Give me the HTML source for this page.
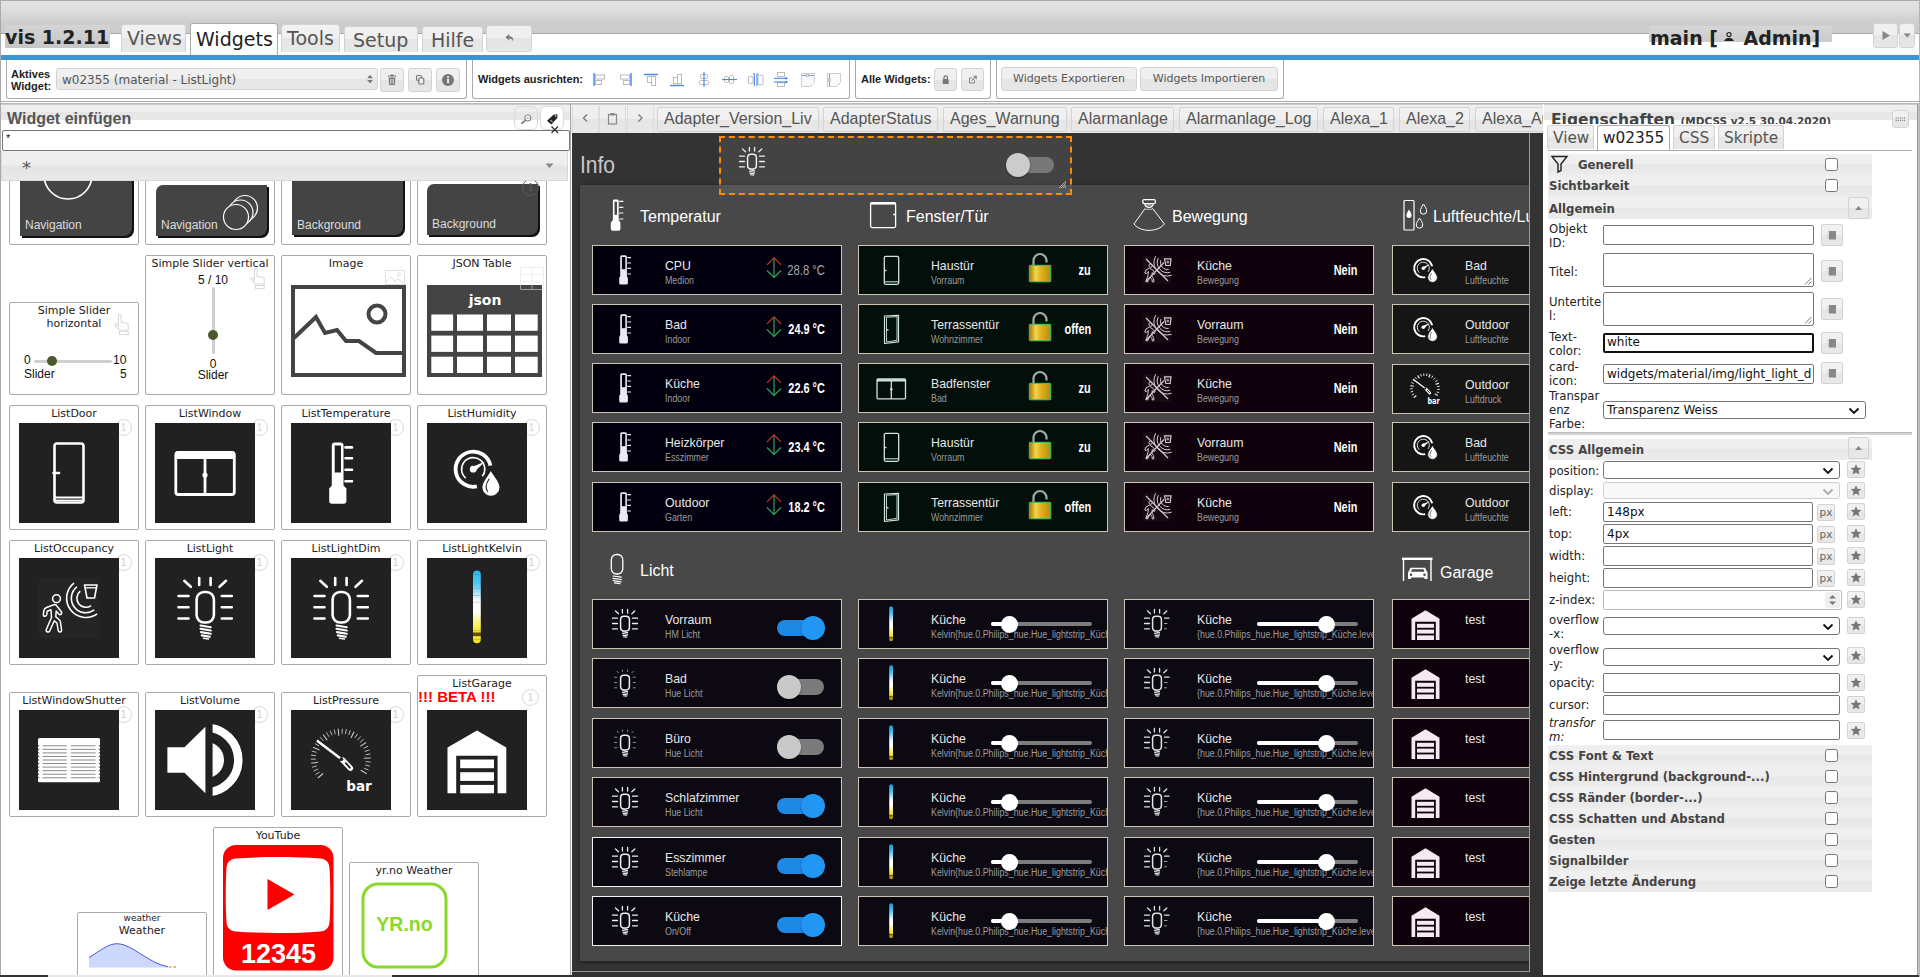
<!DOCTYPE html>
<html lang="de"><head><meta charset="utf-8"><title>vis</title>
<style>

*{box-sizing:border-box;margin:0;padding:0}
html,body{width:1920px;height:977px;overflow:hidden;background:#fff}
body{position:relative;font-family:"DejaVu Sans","Liberation Sans",sans-serif;font-size:12px;color:#222}
.abs{position:absolute}
.ar{font-family:"Liberation Sans",sans-serif}
.dv{font-family:"DejaVu Sans","Liberation Sans",sans-serif}
/* header */
#hdr{left:0;top:0;width:1920px;height:34px;background:linear-gradient(#e2e2e2,#dedede 28%,#cecece 66%,#cbcbcb);border-top:1px solid #aaa;border-bottom:1px solid #aaa}
#frameL{left:0;top:0;width:1px;height:977px;background:#aaa}
.tab{position:absolute;font-size:19px;color:#555;background:linear-gradient(#f1f1f1,#f0f0f0 50%,#e6e6e6 50%,#e8e8e8);border:1px solid #d3d3d3;border-bottom:none;border-radius:3px 3px 0 0;white-space:nowrap;line-height:1}
.tab.on{background:#fff;border-color:#aaa;color:#212121}
.gbtn{position:absolute;background:linear-gradient(#f0f0f0,#efefef 50%,#e4e4e4 50%,#e7e7e7);border:1px solid #d3d3d3;border-radius:3px}
#blue{left:0;top:55px;width:1920px;height:5px;background:#3a96d3}
.grp{position:absolute;top:60px;height:39px;border:1px solid #aaa;border-top:none;border-radius:0 0 3px 3px;background:#fff}
.tlabel{position:absolute;font-family:"Liberation Sans",sans-serif;font-weight:bold;font-size:11px;color:#222;line-height:12px;white-space:nowrap}

/* left panel */
#lp{left:1px;top:104px;width:569px;height:873px;overflow:hidden;background:#fff}
.tile{position:absolute;width:130px;border:1px solid #aaa;border-radius:2px;background:#fff}
.tl{position:absolute;left:0;width:128px;text-align:center;font-size:11px;line-height:13px;color:#222;white-space:nowrap}
.dimg{position:absolute;left:9px;width:100px;height:100px;background:#212121}
.one{position:absolute;width:17px;height:17px;border:1px solid #d8d8d8;border-radius:50%;font-size:10px;line-height:15px;text-align:center;color:#d0d0d0;font-family:"Liberation Sans",sans-serif}

/* center */
#ctb{left:571px;top:104px;width:972px;height:29px;background:linear-gradient(#f0f0f0,#eee 48%,#e5e5e5 52%,#e9e9e9);border-top:1px solid #ccc;overflow:hidden}
.vt{position:absolute;top:2px;height:25px;font-family:"Liberation Sans",sans-serif;font-size:16px;color:#555;line-height:21px;padding-left:6px;white-space:nowrap;background:linear-gradient(#f1f1f1,#f0f0f0 50%,#e6e6e6 50%,#e8e8e8);border:1px solid #d3d3d3;border-radius:2px;overflow:hidden}
#cdark{left:572px;top:133px;width:971px;height:842px;background:#333}
#cv{left:572px;top:133px;width:957px;height:838px;overflow:hidden;background:#333}
.card{position:absolute;width:250px;border:1px solid #cdc4b3;overflow:hidden;font-family:"Liberation Sans",sans-serif}
.ct{position:absolute;left:72px;top:12px;font-size:13.5px;line-height:16px;color:#e8e8e8;white-space:nowrap;transform:scaleX(.91);transform-origin:0 50%}
.cs{position:absolute;left:72px;top:28.5px;font-size:10px;line-height:11px;color:#9c9c9c;white-space:nowrap;transform:scaleX(.885);transform-origin:0 50%}
.cvl{position:absolute;right:16px;top:16px;font-size:14px;line-height:16px;font-weight:bold;color:#fff;white-space:nowrap;transform:scaleX(.78);transform-origin:100% 50%}
.sh{position:absolute;font-family:"Liberation Sans",sans-serif;font-size:16px;line-height:18px;color:#fff;white-space:nowrap}
.ci{position:absolute;left:17px;top:8.500px}

/* right panel */
#rp{left:1544px;top:104px;width:376px;height:871px;background:#fff;overflow:hidden}
.rtab{position:absolute;top:21px;height:24px;font-size:15.3px;color:#555;line-height:25px;padding-left:5px;white-space:nowrap;background:linear-gradient(#f1f1f1,#f0f0f0 50%,#e6e6e6 50%,#e8e8e8);border:1px solid #d3d3d3;border-bottom:none;border-radius:3px 3px 0 0}
.rtab.on{background:#fff;border-color:#aaa;color:#212121;height:25px}
.grow{position:absolute;left:4px;width:324px;height:21px;background:linear-gradient(#f0f0f0,#eee 48%,#e7e7e7 52%,#ececec);font-weight:bold;font-size:11.7px;color:#444;line-height:23px;padding-left:1px;white-space:nowrap}
.cb{position:absolute;left:277px;top:4px;width:13px;height:13px;border:1px solid #767676;border-radius:2.500px;background:#fff}
.lbl{position:absolute;left:5px;font-size:11.7px;line-height:14px;color:#222;white-space:nowrap}
.inp{position:absolute;left:59px;background:#fff;border:1px solid #767676;border-radius:2px;font-size:12px;line-height:18px;color:#111;padding-left:3px;white-space:nowrap;overflow:hidden}
.sbtn{position:absolute;background:linear-gradient(#f1f1f1,#f0f0f0 50%,#e6e6e6 50%,#e8e8e8);border:1px solid #d3d3d3;border-radius:2px}

</style></head>
<body>
<div id="hdr" class="abs"></div>
<div class="abs dv" style="left:5px;top:25px;width:105px;height:23px;background:linear-gradient(#d4d4d4,#c6c6c6);"></div>
<div class="abs dv" id="vistitle" style="left:5px;top:25px;font-size:19px;font-weight:bold;line-height:24px;color:#222;white-space:nowrap">vis 1.2.11</div>
<div class="tab" style="left:121px;top:24px;width:65px;height:28px;padding:4px 0 0 5px">Views</div>
<div class="tab on" style="left:190px;top:23px;width:88px;height:33px;padding:6px 0 0 5px">Widgets</div>
<div class="tab" style="left:281px;top:24px;width:59px;height:28px;padding:4px 0 0 5px">Tools</div>
<div class="tab" style="left:344px;top:26px;width:74px;height:26px;padding:4px 0 0 8px">Setup</div>
<div class="tab" style="left:422px;top:26px;width:61px;height:26px;padding:4px 0 0 8px">Hilfe</div>
<div class="gbtn" style="left:486px;top:25px;width:46px;height:27px"><svg width="46" height="27" viewBox="0 0 46 27" style="position:absolute;left:-1px;top:-1px"><path d="M19.500 12.300 L23.200 9 V11.200 C26.800 11.200 27.800 13.600 26.800 16.500 C26.600 14.600 25.500 13.500 23.200 13.500 V15.600 Z" fill="#7a7a7a"/></svg></div>
<div class="abs" style="left:1649px;top:26px;width:183px;height:16px;background:linear-gradient(#d6d6d6,#cacaca)"></div>
<div class="abs dv" id="maintitle" style="left:1650px;top:26px;font-size:19px;font-weight:bold;line-height:24px;color:#222;white-space:nowrap">main [<svg width="12" height="12" viewBox="0 0 12 12" style="margin:0 8px 0 5.500px;vertical-align:2px"><circle cx="6" cy="3.6" r="2.1" fill="none" stroke="#222" stroke-width="1.2"/><path d="M1 10 C2.5 7.5 4 7 6 7 C8 7 9.5 7.5 11 10 Z" fill="#222"/></svg>Admin]</div>
<div class="gbtn" style="left:1873px;top:23px;width:25px;height:25px"><svg width="25" height="25" style="position:absolute;left:-1px;top:-1px"><path d="M9.5 8 L17 12.5 L9.5 17 Z" fill="#888"/></svg></div>
<div class="gbtn" style="left:1899px;top:23px;width:16px;height:25px"><svg width="16" height="25" style="position:absolute;left:-1px;top:-1px"><path d="M4.5 10.5 H12 L8.2 14.5 Z" fill="#888"/></svg></div>
<div id="blue" class="abs"></div>
<div class="grp" style="left:6px;width:461px"></div>
<div class="grp" style="left:472px;width:378px"></div>
<div class="grp" style="left:855px;width:136px"></div>
<div class="grp" style="left:996px;width:288px"></div>
<div class="abs" style="left:0;top:101px;width:1920px;height:1px;background:#aaa"></div>
<div class="abs" style="left:0;top:103px;width:1920px;height:1px;background:#b8b8b8"></div>
<div class="tlabel" style="left:11px;top:68px">Aktives<br>Widget:</div>
<div class="abs dv" style="left:56px;top:68px;width:322px;height:22px;background:linear-gradient(#f1f1f1,#efefef 50%,#e5e5e5 50%,#e8e8e8);border:1px solid #d3d3d3;border-radius:3px;font-size:12px;color:#555;line-height:22px;padding-left:5px;white-space:nowrap">w02355 (material - ListLight)<svg width="8" height="12" style="position:absolute;left:309px;top:4px"><path d="M1.200 5.200 L4 1.800 L6.800 5.200 Z M1.200 7 L4 10.400 L6.800 7 Z" fill="#777"/></svg></div>
<div class="gbtn" style="left:380px;top:68px;width:24px;height:24px"><svg width="24" height="24" style="position:absolute;left:-1px;top:-1px"><path d="M7.800 8.600 h8.400 v-1.100 h-2.600 v-.9 h-3.200 v.9 h-2.600 Z M8.600 9.600 h6.800 l-.5 6.400 a1 1 0 0 1 -1 1 h-3.800 a1 1 0 0 1 -1 -1 Z" fill="#777"/><path d="M10.500 10.800 v5 M12 10.800 v5 M13.500 10.800 v5" stroke="#eee" stroke-width=".7"/></svg></div>
<div class="gbtn" style="left:408px;top:68px;width:24px;height:24px"><svg width="24" height="24" style="position:absolute;left:-1px;top:-1px"><rect x="8.5" y="7.5" width="5" height="5" rx="1.5" fill="none" stroke="#777" stroke-width="1.2"/><rect x="10.8" y="10" width="5" height="6" rx="1" fill="#eee" stroke="#777" stroke-width="1.2"/></svg></div>
<div class="gbtn" style="left:436px;top:68px;width:24px;height:24px"><svg width="24" height="24" style="position:absolute;left:-1px;top:-1px"><circle cx="12" cy="12" r="6" fill="#777"/><rect x="11.1" y="11" width="1.9" height="4.3" fill="#eee"/><rect x="11.1" y="8.3" width="1.9" height="1.8" fill="#eee"/></svg></div>
<div class="tlabel" style="left:478px;top:73px">Widgets ausrichten:</div>
<div class="tlabel" style="left:861px;top:73px">Alle Widgets:</div>
<div class="gbtn" style="left:934px;top:68px;width:23px;height:23px"><svg width="24" height="24" style="position:absolute;left:-1px;top:-1px"><rect x="8.7" y="11" width="6" height="5" rx="1" fill="#777"/><path d="M10 11 v-1.5 a1.7 1.7 0 0 1 3.4 0 v1.5" fill="none" stroke="#777" stroke-width="1.2"/></svg></div>
<div class="gbtn" style="left:961px;top:68px;width:23px;height:23px"><svg width="24" height="24" style="position:absolute;left:-1px;top:-1px"><path d="M13.5 12.5 v2.5 h-5 v-5 h2.5" fill="none" stroke="#888" stroke-width="1"/><path d="M11 12.5 L15 8.5 M12.3 8.3 h3 v3" fill="none" stroke="#888" stroke-width="1.1"/></svg></div>
<div class="gbtn dv" style="left:1001px;top:67px;width:136px;height:24px;font-size:11px;color:#555;text-align:center;line-height:22px;white-space:nowrap">Widgets Exportieren</div>
<div class="gbtn dv" style="left:1140px;top:67px;width:138px;height:24px;font-size:11px;color:#555;text-align:center;line-height:22px;white-space:nowrap">Widgets Importieren</div>
<svg class="abs" width="17" height="17" style="left:592px;top:71px"><path d="M2 2 V15" stroke="#4a8af0" stroke-width="1.5"/><rect x="3.5" y="4" width="9" height="4" fill="none" stroke="#bbb"/><rect x="3.5" y="9.5" width="6" height="4" fill="none" stroke="#bbb"/></svg>
<svg class="abs" width="17" height="17" style="left:616.5px;top:71px"><path d="M14 2 V15" stroke="#4a8af0" stroke-width="1.5"/><rect x="3.5" y="4" width="9" height="4" fill="none" stroke="#bbb"/><rect x="6.5" y="9.5" width="6" height="4" fill="none" stroke="#bbb"/></svg>
<svg class="abs" width="17" height="17" style="left:643px;top:72px"><path d="M1 2.5 H15" stroke="#4a8af0" stroke-width="1.5"/><rect x="4.5" y="4.5" width="4" height="6" fill="none" stroke="#bbb"/><rect x="8.5" y="4.5" width="4" height="9" fill="none" stroke="#bbb"/></svg>
<svg class="abs" width="17" height="17" style="left:669px;top:71px"><path d="M1 14.5 H15" stroke="#4a8af0" stroke-width="1.5"/><rect x="4.5" y="6.5" width="4" height="6" fill="none" stroke="#bbb"/><rect x="8.5" y="3.5" width="4" height="9" fill="none" stroke="#bbb"/></svg>
<svg class="abs" width="17" height="17" style="left:696px;top:71px"><rect x="4.5" y="3.500" width="7" height="4" rx="1" fill="none" stroke="#bbb"/><rect x="3.5" y="9.5" width="9" height="4" rx="1" fill="none" stroke="#bbb"/><path d="M8 1 V16" stroke="#4a8af0" stroke-width="1.2"/></svg>
<svg class="abs" width="17" height="17" style="left:721px;top:71px"><rect x="3.500" y="5.5" width="4" height="6" rx="1" fill="none" stroke="#bbb"/><rect x="8.5" y="4.5" width="4" height="8" rx="1" fill="none" stroke="#bbb"/><path d="M1 8.5 H16" stroke="#4a8af0" stroke-width="1.2"/></svg>
<svg class="abs" width="17" height="17" style="left:747px;top:71px"><rect x="1.500" y="5.5" width="4.500" height="7" rx="1" fill="none" stroke="#bbb"/><rect x="11" y="4.5" width="5" height="9" rx="1" fill="none" stroke="#bbb"/><path d="M7.300 2.500 V15 M10 2.500 V15" stroke="#3a7af0" stroke-width="1"/><path d="M5.800 3 h1.500 M10 3 h1.500" stroke="#3a7af0" stroke-width=".8"/></svg>
<svg class="abs" width="17" height="17" style="left:773px;top:71px"><rect x="4.500" y="1.5" width="7" height="4" fill="none" stroke="#bbb"/><rect x="4.5" y="11.5" width="7" height="4" fill="none" stroke="#bbb"/><path d="M1 7.300 H14 M1 11 H14" stroke="#3a7af0" stroke-width="1"/><path d="M12.500 5.800 L15 7.300 L12.500 8.800 Z M12.500 9.500 L15 11 L12.500 12.500 Z" fill="#3a7af0"/></svg>
<svg class="abs" width="17" height="17" style="left:798.5px;top:71px"><path d="M2.500 2.5 h13 v9 l-4 4 h-9 Z" fill="#fafafa" stroke="#ccc"/><path d="M3 4.5 h12" stroke="#4a8af0" stroke-width=".8"/><rect x="7.5" y="3.5" width="2" height="2" fill="#fff" stroke="#999" stroke-width=".6"/></svg>
<svg class="abs" width="17" height="17" style="left:824.5px;top:71px"><path d="M2.500 2.5 h13 v9 l-4 4 h-9 Z" fill="#fafafa" stroke="#ccc"/><path d="M4.5 3 v12" stroke="#4a8af0" stroke-width=".8"/><rect x="3.5" y="8" width="2" height="2" fill="#fff" stroke="#999" stroke-width=".6"/></svg>
<div id="lp" class="abs"><div class="tile" style="left:8px;top:76px;height:65px"><div class="abs" style="left:10px;top:-40px;width:112px;height:95px;background:#444;border-radius:6px 0 8px 0;box-shadow:2px 2px 0 #111"></div><svg class="abs" width="60" height="40" style="left:28px;top:-5px"><circle cx="30" cy="-1" r="24" fill="none" stroke="#fff" stroke-width="1.6"/></svg><div class="abs ar" style="left:15px;top:37px;font-size:12px;color:#ddd;line-height:14px">Navigation</div></div><div class="tile" style="left:144px;top:76px;height:65px"><div class="abs" style="left:10px;top:4px;width:111px;height:51px;background:#444;border-radius:7px 0 8px 0;box-shadow:2px 2px 0 #111"></div><svg class="abs" width="50" height="50" style="left:66px;top:8px"><circle cx="33" cy="19" r="12.5" fill="#444" stroke="#fff" stroke-width="1.2"/><circle cx="28.5" cy="23.5" r="12.5" fill="#444" stroke="#fff" stroke-width="1.2"/><circle cx="24" cy="28" r="12.5" fill="#444" stroke="#fff" stroke-width="1.2"/></svg><div class="abs ar" style="left:15px;top:37px;font-size:12px;color:#ddd;line-height:14px">Navigation</div></div><div class="tile" style="left:280px;top:76px;height:65px"><div class="abs" style="left:10px;top:-40px;width:111px;height:94px;background:#444;border-radius:6px 0 8px 0;box-shadow:2px 2px 0 #111"></div><div class="abs ar" style="left:15px;top:37px;font-size:12px;color:#ddd;line-height:14px">Background</div></div><div class="tile" style="left:416px;top:76px;height:65px"><div class="abs" style="left:9px;top:3px;width:111px;height:51px;background:#444;border-radius:7px 0 8px 0;box-shadow:2px 2px 0 #111"></div><div class="abs ar" style="left:14px;top:36px;font-size:12px;color:#ddd;line-height:14px">Background</div><div class="one" style="left:104px;top:-2px;border-color:#5c5c5c;color:#5c5c5c">1</div></div><div class="tile" style="left:8px;top:198px;height:93px"><div class="tl" style="top:1px">Simple Slider<br>horizontal</div><svg class="abs" width="20" height="24" viewBox="0 0 20 24" style="left:102px;top:9px"><path d="M6.5 14 V3.5 a1.3 1.3 0 0 1 2.6 0 V10 l5.5 1.2 a2 2 0 0 1 1.6 2 V18 H7.5 L3 13.5 a1.2 1.2 0 0 1 1.8 -1.5 Z M7.5 19.5 H16.2 V22.5 H7.5 Z" fill="#fff" stroke="#d9d9d9" stroke-width="1.1"/></svg><div class="abs ar" style="left:14px;top:50px;font-size:12px;line-height:14px;color:#111">0</div><div class="abs" style="left:24px;top:56.500px;width:78px;height:3px;background:#cfcfcf;border-radius:1.500px"></div><div class="abs" style="left:37px;top:53px;width:10px;height:10px;border-radius:50%;background:#4b5a2a"></div><div class="abs ar" style="left:103px;top:50px;font-size:12px;line-height:14px;color:#111">10</div><div class="abs ar" style="left:14px;top:64px;font-size:12px;line-height:14px;color:#111">Slider</div><div class="abs ar" style="left:110px;top:64px;font-size:12px;line-height:14px;color:#111">5</div></div><div class="tile" style="left:144px;top:151px;height:140px"><div class="tl" style="top:1px">Simple Slider vertical</div><svg class="abs" width="20" height="24" viewBox="0 0 20 24" style="left:102px;top:10px"><path d="M6.5 14 V3.5 a1.3 1.3 0 0 1 2.6 0 V10 l5.5 1.2 a2 2 0 0 1 1.6 2 V18 H7.5 L3 13.5 a1.2 1.2 0 0 1 1.8 -1.5 Z M7.5 19.5 H16.2 V22.5 H7.5 Z" fill="#fff" stroke="#d9d9d9" stroke-width="1.1"/></svg><div class="abs ar" style="left:0;width:134px;text-align:center;top:17px;font-size:12px;line-height:14px;color:#111">5 / 10</div><div class="abs" style="left:65.500px;top:31px;width:3px;height:67px;background:#cfcfcf;border-radius:1.500px"></div><div class="abs" style="left:62px;top:74px;width:10px;height:10px;border-radius:50%;background:#4b5a2a"></div><div class="abs ar" style="left:0;width:134px;text-align:center;top:101px;font-size:12px;line-height:14px;color:#111">0</div><div class="abs ar" style="left:0;width:134px;text-align:center;top:112px;font-size:12px;line-height:14px;color:#111">Slider</div></div><div class="tile" style="left:280px;top:151px;height:140px"><div class="tl" style="top:1px">Image</div><svg class="abs" width="22" height="18" style="left:102px;top:13px"><rect x="1.500" y="1.5" width="19" height="14" fill="#fff" stroke="#e0e0e0"/><path d="M2 13 l5 -5 l4 4 l3 -2 l6 5" fill="none" stroke="#e0e0e0"/><circle cx="15" cy="5.5" r="1.5" fill="none" stroke="#e0e0e0"/></svg><svg class="abs" width="116" height="93" style="left:9px;top:29px"><rect x="2" y="2" width="111" height="88" fill="#fff" stroke="#444" stroke-width="4"/><path d="M3 53 L25 32 L34 48 L46 45 L55 56 L68 56 L85 68 L113 68" fill="none" stroke="#444" stroke-width="4"/><circle cx="86" cy="29" r="8.5" fill="none" stroke="#444" stroke-width="4"/></svg></div><div class="tile" style="left:416px;top:151px;height:140px"><div class="tl" style="top:1px">JSON Table</div><svg class="abs" width="116" height="93" style="left:9px;top:29px"><rect x="0" y="0" width="115" height="92" fill="#444"/><rect x="4.3" y="29.5" width="21.8" height="16.300" fill="#fff"/><rect x="30" y="29.5" width="26" height="16.300" fill="#fff"/><rect x="60" y="29.5" width="24" height="16.300" fill="#fff"/><rect x="88" y="29.5" width="22.7" height="16.300" fill="#fff"/><rect x="4.3" y="50.6" width="21.8" height="16.300" fill="#fff"/><rect x="30" y="50.6" width="26" height="16.300" fill="#fff"/><rect x="60" y="50.6" width="24" height="16.300" fill="#fff"/><rect x="88" y="50.6" width="22.7" height="16.300" fill="#fff"/><rect x="4.3" y="71.7" width="21.8" height="16.300" fill="#fff"/><rect x="30" y="71.7" width="26" height="16.300" fill="#fff"/><rect x="60" y="71.7" width="24" height="16.300" fill="#fff"/><rect x="88" y="71.7" width="22.7" height="16.300" fill="#fff"/><text x="58" y="20" font-family="DejaVu Sans, sans-serif" font-weight="bold" font-size="14" fill="#fff" text-anchor="middle">json</text></svg><svg class="abs" width="26" height="26" style="left:101px;top:10px" opacity=".55"><path d="M1.5 1.5 h23 v22 h-23 Z M1.5 8.5 h23 M1.5 16 h23 M13 1.5 v22" fill="none" stroke="#e4e4e4" stroke-width="1"/></svg></div><div class="tile" style="left:8px;top:301px;height:125px"><div class="tl" style="top:1px">ListDoor</div><div class="one" style="left:105px;top:13px">1</div><svg class="dimg" style="top:17px" width="100" height="100" viewBox="0 0 100 100"><rect x="35.500" y="20.5" width="29" height="59" rx="2.5" fill="none" stroke="#fff" stroke-width="2.6"/><path d="M36 74.500 H64" stroke="#fff" stroke-width="2"/><path d="M36 77.3 H64" stroke="#fff" stroke-width="1.4"/><path d="M34.5 50 H40" stroke="#fff" stroke-width="2.6" stroke-linecap="round"/></svg></div><div class="tile" style="left:144px;top:301px;height:125px"><div class="tl" style="top:1px">ListWindow</div><div class="one" style="left:105px;top:13px">1</div><svg class="dimg" style="top:17px" width="100" height="100" viewBox="0 0 100 100"><rect x="20.800" y="29.5" width="58.500" height="42" rx="2.5" fill="none" stroke="#fff" stroke-width="2.8"/><rect x="20" y="28.5" width="60" height="7.5" rx="2" fill="#fff"/><path d="M50 35 V72" stroke="#fff" stroke-width="2.8"/><circle cx="50" cy="52" r="2.6" fill="#fff"/></svg></div><div class="tile" style="left:280px;top:301px;height:125px"><div class="tl" style="top:1px">ListTemperature</div><div class="one" style="left:105px;top:13px">1</div><svg class="dimg" style="top:17px" width="100" height="100" viewBox="0 0 100 100"><path d="M40.800 22.500 a3 3 0 0 1 3 -3 h5.700 a3 3 0 0 1 3 3 V62.500 l2.900 3 V78 a2.800 2.800 0 0 1 -2.800 2.800 h-11.600 a2.800 2.800 0 0 1 -2.800 -2.800 V65.500 l2.600 -3 Z" fill="#fff"/><rect x="43.700" y="22.500" width="6.300" height="27" fill="#212121"/><path d="M54.500 24.400 h6.500 M54.500 35.300 h6.500 M54.500 46.700 h6.500 M54.500 58.300 h6.500" stroke="#fff" stroke-width="2.600" stroke-linecap="round"/></svg></div><div class="tile" style="left:416px;top:301px;height:125px"><div class="tl" style="top:1px">ListHumidity</div><div class="one" style="left:105px;top:13px">1</div><svg class="dimg" style="top:17px" width="100" height="100" viewBox="0 0 100 100"><path d="M49.86 63.42 A17.6 17.6 0 1 1 63.42 42.54" fill="none" stroke="#fff" stroke-width="3.8" stroke-linecap="butt"/><path d="M38.74 55.09 A11.6 11.6 0 1 1 55.34 53.34" fill="none" stroke="#fff" stroke-width="1.6" stroke-linecap="butt"/><path d="M45.00 44.00 L58.20 38.40 L47.70 48.40 Z" fill="#fff"/><circle cx="46.2" cy="46.2" r="3.40" fill="#fff"/><path d="M63.80 46.70 C67.80 53.70 73.30 58.70 73.30 64.20 A9.30 9.30 0 0 1 54.60 64.20 C54.60 58.70 59.80 53.70 63.80 46.70 Z" fill="#fff" stroke="#212121" stroke-width="1.60"/><path d="M62.30 55.70 C58.80 60.70 58.30 65.70 60.80 68.70" fill="none" stroke="#212121" stroke-width="1.10"/></svg></div><div class="tile" style="left:8px;top:436px;height:125px"><div class="tl" style="top:1px">ListOccupancy</div><div class="one" style="left:105px;top:13px">1</div><svg class="dimg" style="top:17px" width="100" height="100" viewBox="0 0 100 100"><rect x="19.500" y="19.500" width="61" height="61" fill="#252525"/><circle cx="37.500" cy="40.700" r="3.900" fill="none" stroke="#fff" stroke-width="1.600"/><path d="M35.500 46.500 L27.500 49.500 Q25 50.500 24.800 53 L24.300 56.500 Q24.300 58.300 26 58.300 Q27.600 58.300 27.800 56.500 L28.200 53.200 L32 51.800 L32.500 59.500 L27.300 71.500 Q26.800 73.500 28.500 74 Q30 74.300 30.800 72.800 L35.300 62.800 L38 65 L39.200 72.500 Q39.600 74.300 41.300 74 Q42.800 73.600 42.600 71.800 L41.300 63.500 Q41.200 62.500 40.300 61.800 L36.800 58.800 L37.200 53 L39.800 56 Q41 57.200 42.200 56.200 Q43.300 55.200 42.300 53.800 L38.500 48.800 Q37.500 46.800 35.500 46.500 Z" fill="none" stroke="#fff" stroke-width="1.500" stroke-linejoin="round"/><path d="M65.500 27 H78 L75.500 40 H68 Z" fill="none" stroke="#fff" stroke-width="1.600" stroke-linejoin="round"/><path d="M66 29.800 H77.500" stroke="#fff" stroke-width="1.300"/><path d="M72.09 47.58 A9 9 0 0 1 61.26 33.21" fill="none" stroke="#fff" stroke-width="1.6" stroke-linecap="butt"/><path d="M75.26 51.95 A14.4 14.4 0 0 1 57.93 28.95" fill="none" stroke="#fff" stroke-width="1.6" stroke-linecap="butt"/><path d="M78.14 55.91 A19.3 19.3 0 0 1 54.92 25.09" fill="none" stroke="#fff" stroke-width="1.6" stroke-linecap="butt"/></svg></div><div class="tile" style="left:144px;top:436px;height:125px"><div class="tl" style="top:1px">ListLight</div><div class="one" style="left:105px;top:13px">1</div><svg class="dimg" style="top:17px" width="100" height="100" viewBox="0 0 100 100"><rect x="41.600" y="34" width="17.300" height="30.500" rx="7.500" fill="none" stroke="#fff" stroke-width="2.6"/><path d="M23.500 38 H33.500 M23.500 49.200 H33.500 M23.500 60.500 H33.500 M66.800 38 H76.800 M66.800 49.200 H76.800 M66.800 60.500 H76.800 M44.200 20 V27 M55.600 20 V27 M29.300 22.800 L35.800 28.800 M71 22.800 L64.500 28.800" stroke="#fff" stroke-width="2.6" stroke-linecap="round"/><path d="M45.500 67.500 L55.800 69.200 M45.500 70.800 L55.800 72.500 M46 74.100 L55.800 75.800 M46.800 77.400 L54.800 78.800" stroke="#fff" stroke-width="2.1" stroke-linecap="round"/><path d="M48.500 80.300 L53.500 81" stroke="#fff" stroke-width="1.6" stroke-linecap="round"/></svg></div><div class="tile" style="left:280px;top:436px;height:125px"><div class="tl" style="top:1px">ListLightDim</div><div class="one" style="left:105px;top:13px">1</div><svg class="dimg" style="top:17px" width="100" height="100" viewBox="0 0 100 100"><rect x="41.600" y="34" width="17.300" height="30.500" rx="7.500" fill="none" stroke="#fff" stroke-width="2.6"/><path d="M23.500 38 H33.500 M23.500 49.200 H33.500 M23.500 60.500 H33.500 M66.800 38 H76.800 M66.800 49.200 H76.800 M66.800 60.500 H76.800 M44.200 20 V27 M55.600 20 V27 M29.300 22.800 L35.800 28.800 M71 22.800 L64.500 28.800" stroke="#fff" stroke-width="2.6" stroke-linecap="round"/><path d="M45.500 67.500 L55.800 69.200 M45.500 70.800 L55.800 72.500 M46 74.100 L55.800 75.800 M46.800 77.400 L54.800 78.800" stroke="#fff" stroke-width="2.1" stroke-linecap="round"/><path d="M48.500 80.300 L53.500 81" stroke="#fff" stroke-width="1.6" stroke-linecap="round"/></svg></div><div class="tile" style="left:416px;top:436px;height:125px"><div class="tl" style="top:1px">ListLightKelvin</div><div class="one" style="left:105px;top:13px">1</div><svg class="dimg" style="top:17px" width="100" height="100" viewBox="0 0 100 100"><defs><linearGradient id="kg" x1="0" y1="0" x2="0" y2="1"><stop offset="0" stop-color="#28b8ea"/><stop offset=".18" stop-color="#4cc8f2"/><stop offset=".42" stop-color="#ffffff"/><stop offset=".56" stop-color="#ffffff"/><stop offset=".72" stop-color="#fbf27a"/><stop offset=".84" stop-color="#f3e52c"/><stop offset=".865" stop-color="#6a4a12"/><stop offset=".895" stop-color="#6a4a12"/><stop offset=".91" stop-color="#f3e52c"/><stop offset="1" stop-color="#f3e52c"/></linearGradient></defs><rect x="46" y="12.400" width="7.800" height="72.800" rx="3.900" fill="url(#kg)"/><path d="M44 16.500 h12 M44 30.300 h12 M44 37.500 h12 M44 44.200 h12 M44 72.600 h12 M44 81.500 h12" stroke="#3a3a3a" stroke-width=".4" opacity=".5"/></svg></div><div class="tile" style="left:8px;top:588px;height:125px"><div class="tl" style="top:1px">ListWindowShutter</div><div class="one" style="left:105px;top:13px">1</div><svg class="dimg" style="top:17px" width="100" height="100" viewBox="0 0 100 100"><rect x="19" y="28" width="62" height="44.300" rx="1.500" fill="#fff"/><path d="M23.500 35.80 H47.800 M51.800 35.80 H76.500" stroke="#8a8a8a" stroke-width="1"/><path d="M19 35.80 h1.2 M79.800 35.80 h1.2" stroke="#212121" stroke-width=".9"/><path d="M23.500 39.35 H47.800 M51.800 39.35 H76.500" stroke="#8a8a8a" stroke-width="1"/><path d="M19 39.35 h1.2 M79.800 39.35 h1.2" stroke="#212121" stroke-width=".9"/><path d="M23.500 42.90 H47.800 M51.800 42.90 H76.500" stroke="#8a8a8a" stroke-width="1"/><path d="M19 42.90 h1.2 M79.800 42.90 h1.2" stroke="#212121" stroke-width=".9"/><path d="M23.500 46.45 H47.800 M51.800 46.45 H76.500" stroke="#8a8a8a" stroke-width="1"/><path d="M19 46.45 h1.2 M79.800 46.45 h1.2" stroke="#212121" stroke-width=".9"/><path d="M23.500 50.00 H47.800 M51.800 50.00 H76.500" stroke="#8a8a8a" stroke-width="1"/><path d="M19 50.00 h1.2 M79.800 50.00 h1.2" stroke="#212121" stroke-width=".9"/><path d="M23.500 53.55 H47.800 M51.800 53.55 H76.500" stroke="#8a8a8a" stroke-width="1"/><path d="M19 53.55 h1.2 M79.800 53.55 h1.2" stroke="#212121" stroke-width=".9"/><path d="M23.500 57.10 H47.800 M51.800 57.10 H76.500" stroke="#8a8a8a" stroke-width="1"/><path d="M19 57.10 h1.2 M79.800 57.10 h1.2" stroke="#212121" stroke-width=".9"/><path d="M23.500 60.65 H47.800 M51.800 60.65 H76.500" stroke="#8a8a8a" stroke-width="1"/><path d="M19 60.65 h1.2 M79.800 60.65 h1.2" stroke="#212121" stroke-width=".9"/><path d="M23.500 64.20 H47.800 M51.800 64.20 H76.500" stroke="#8a8a8a" stroke-width="1"/><path d="M19 64.20 h1.2 M79.800 64.20 h1.2" stroke="#212121" stroke-width=".9"/><path d="M23.500 67.75 H47.800 M51.800 67.75 H76.500" stroke="#8a8a8a" stroke-width="1"/><path d="M19 67.75 h1.2 M79.800 67.75 h1.2" stroke="#212121" stroke-width=".9"/></svg></div><div class="tile" style="left:144px;top:588px;height:125px"><div class="tl" style="top:1px">ListVolume</div><div class="one" style="left:105px;top:13px">1</div><svg class="dimg" style="top:17px" width="100" height="100" viewBox="0 0 100 100"><path d="M12.400 37.300 H29.500 L50.400 16.700 V83.300 L29.500 62.700 H12.400 Z" fill="#fff"/><clipPath id="vc"><rect x="57.600" y="0" width="43" height="100"/></clipPath><g clip-path="url(#vc)"><circle cx="51" cy="50" r="18" fill="#fff"/><circle cx="51" cy="50" r="32.300" fill="none" stroke="#fff" stroke-width="8.500"/></g></svg></div><div class="tile" style="left:280px;top:588px;height:125px"><div class="tl" style="top:1px">ListPressure</div><div class="one" style="left:105px;top:13px">1</div><svg class="dimg" style="top:17px" width="100" height="100" viewBox="0 0 100 100"><path d="M32.18 63.48 L26.82 67.98" stroke="#fff" stroke-width="1.10" opacity="0.75"/><path d="M28.64 62.02 L24.41 64.68" stroke="#fff" stroke-width="0.90" opacity="0.75"/><path d="M27.03 59.02 L22.47 61.08" stroke="#fff" stroke-width="0.90" opacity="0.75"/><path d="M25.84 55.83 L21.04 57.25" stroke="#fff" stroke-width="0.90" opacity="0.75"/><path d="M27.07 52.20 L20.15 53.26" stroke="#fff" stroke-width="1.10" opacity="0.75"/><path d="M24.80 49.11 L19.80 49.19" stroke="#fff" stroke-width="0.90" opacity="0.75"/><path d="M24.98 45.71 L20.02 45.11" stroke="#fff" stroke-width="0.90" opacity="0.75"/><path d="M25.62 42.36 L20.78 41.09" stroke="#fff" stroke-width="0.90" opacity="0.75"/><path d="M28.55 39.90 L22.08 37.22" stroke="#fff" stroke-width="1.10" opacity="0.75"/><path d="M28.22 36.08 L23.90 33.56" stroke="#fff" stroke-width="0.90" opacity="0.75"/><path d="M30.13 33.27 L26.20 30.18" stroke="#fff" stroke-width="0.90" opacity="0.75"/><path d="M32.41 30.74 L28.94 27.14" stroke="#fff" stroke-width="0.90" opacity="0.75"/><path d="M36.20 30.15 L32.06 24.51" stroke="#fff" stroke-width="1.10" opacity="0.75"/><path d="M37.90 26.72 L35.51 22.32" stroke="#fff" stroke-width="0.90" opacity="0.75"/><path d="M40.99 25.30 L39.23 20.62" stroke="#fff" stroke-width="0.90" opacity="0.75"/><path d="M44.26 24.32 L43.15 19.45" stroke="#fff" stroke-width="0.90" opacity="0.75"/><path d="M47.80 25.79 L47.19 18.81" stroke="#fff" stroke-width="1.10" opacity="0.75"/><path d="M51.03 23.73 L51.27 18.74" stroke="#fff" stroke-width="0.90" opacity="0.75"/><path d="M54.41 24.13 L55.33 19.21" stroke="#fff" stroke-width="0.90" opacity="0.75"/><path d="M57.71 24.98 L59.29 20.24" stroke="#fff" stroke-width="0.90" opacity="0.75"/><path d="M59.97 28.07 L63.07 21.79" stroke="#fff" stroke-width="1.10" opacity="0.75"/><path d="M63.80 27.99 L66.60 23.85" stroke="#fff" stroke-width="0.90" opacity="0.75"/><path d="M66.49 30.08 L69.83 26.36" stroke="#fff" stroke-width="0.90" opacity="0.75"/><path d="M68.86 32.53 L72.68 29.29" stroke="#fff" stroke-width="0.90" opacity="0.75"/><path d="M69.20 36.34 L75.10 32.58" stroke="#fff" stroke-width="1.10" opacity="0.75"/><path d="M72.51 38.26 L77.06 36.17" stroke="#fff" stroke-width="0.90" opacity="0.75"/><path d="M73.72 41.44 L78.51 39.99" stroke="#fff" stroke-width="0.90" opacity="0.75"/><path d="M74.49 44.76 L79.43 43.97" stroke="#fff" stroke-width="0.90" opacity="0.75"/><path d="M72.79 48.20 L79.79 48.05" stroke="#fff" stroke-width="1.10" opacity="0.75"/><path d="M74.64 51.56 L79.60 52.13" stroke="#fff" stroke-width="0.90" opacity="0.75"/><path d="M74.02 54.91 L78.86 56.15" stroke="#fff" stroke-width="0.90" opacity="0.75"/><path d="M72.95 58.14 L77.58 60.03" stroke="#fff" stroke-width="0.90" opacity="0.75"/><path d="M69.72 60.20 L75.78 63.70" stroke="#fff" stroke-width="1.10" opacity="0.75"/><path d="M26.80 31.20 L53.80 51.70" stroke="#fff" stroke-width="2.60" stroke-linecap="round"/><path d="M51.80 50.20 L59.30 58.20" stroke="#fff" stroke-width="5.50" stroke-linecap="round"/><circle cx="50.30" cy="49.20" r="1.90" fill="#212121"/><path d="M54.80 53.20 L58.80 57.70" stroke="#212121" stroke-width="1.80" stroke-linecap="round"/><text x="55.30" y="80.50" font-family="DejaVu Sans, sans-serif" font-weight="bold" font-size="13.50" fill="#fff" textLength="25.50" lengthAdjust="spacingAndGlyphs">bar</text></svg></div><div class="tile" style="left:416px;top:571px;height:142px"><div class="tl" style="top:1px">ListGarage</div><div class="one" style="left:104px;top:13px">1</div><svg class="dimg" style="top:34px" width="100" height="100" viewBox="0 0 100 100"><path d="M50 20.500 L79.300 37.600 V83.300 H70.600 V45.800 H29.200 V83.300 H20.500 V37.600 Z" fill="#fff"/><rect x="33.200" y="49.500" width="33.800" height="8.700" fill="#fff"/><rect x="33.200" y="62.200" width="33.800" height="8.700" fill="#fff"/><rect x="33.200" y="74.900" width="33.800" height="8.400" fill="#fff"/></svg><div class="abs ar" style="left:0px;top:13px;font-size:15px;font-weight:bold;color:#f00;line-height:16px;white-space:nowrap">!!! BETA !!!</div></div><div class="tile" style="left:76px;top:808px;height:70px"><div class="tl" style="top:0px;font-size:9px;line-height:11px">weather</div><div class="tl" style="top:11px">Weather</div><svg class="abs" width="110" height="40" style="left:8px;top:26px"><path d="M3 18.500 C14 12 22 4.500 31.500 4.700 C46 5 62 24 82 27.800 L90 27.800 V28.500 H3 Z" fill="#ccd8fc"/><path d="M3 18.500 C14 12 22 4.500 31.500 4.700 C46 5 62 24 82 27.800" fill="none" stroke="#4a55e8" stroke-width="1"/><circle cx="34" cy="5" r="1" fill="#f0a030"/><circle cx="84" cy="28" r="1" fill="#f0a030"/><circle cx="89" cy="28" r="1" fill="#f0a030"/></svg></div><div class="tile" style="left:212px;top:723px;height:160px"><div class="tl" style="top:1px">YouTube</div><svg class="abs" width="112" height="128" style="left:8px;top:16px"><rect x="1" y="1" width="110.500" height="125.500" rx="13" fill="#fe0000"/><path d="M14 14.500 C40 12.500 72 12.500 98 14.500 C104 15 107 18 107.500 24 C108.500 38 108.500 64 107.500 78 C107 84 104 87 98 87.500 C72 89.500 40 89.500 14 87.500 C8 87 5 84 4.500 78 C3.500 64 3.500 38 4.500 24 C5 18 8 15 14 14.500 Z" fill="#fff"/><path d="M45.500 35 L72.500 50.500 L45.500 66 Z" fill="#fe0000"/><text x="56.500" y="118.500" font-family="Liberation Sans, sans-serif" font-weight="bold" font-size="27" fill="#fff" text-anchor="middle">12345</text></svg></div><div class="tile" style="left:348px;top:758px;height:120px"><div class="tl" style="top:1px">yr.no Weather</div><svg class="abs" width="92" height="92" style="left:9px;top:17px"><rect x="4" y="4" width="83" height="83" rx="15" fill="#fff" stroke="#8bd82c" stroke-width="3"/><text x="45.500" y="50.500" font-family="Liberation Sans, sans-serif" font-weight="bold" font-size="19.500" fill="#8bd82c" text-anchor="middle">YR.no</text></svg></div><div class="abs" style="left:0;top:0;width:569px;height:16px;background:linear-gradient(#efefef,#eee 45%,#e6e6e6 45%,#e8e8e8);border-top:1px solid #ccc"></div><div class="abs" style="left:0;top:16px;width:569px;height:11px;background:#fff"></div><div class="abs ar" style="left:6px;top:5px;font-size:16px;font-weight:bold;color:#555;line-height:20px;white-space:nowrap">Widget einfügen</div><div class="abs" style="left:513px;top:2px;width:24px;height:24px;border:1px solid #ddd;border-radius:6px"><svg width="24" height="24" style="position:absolute;left:-1px;top:.5px"><circle cx="13.800" cy="10" r="3" fill="#fff" stroke="#888" stroke-width="1.2"/><path d="M11.500 12.300 L7.800 15.300" stroke="#888" stroke-width="1.8" stroke-linecap="round"/><path d="M12.300 10 h3" stroke="#888" stroke-width=".9"/></svg></div><div class="abs" style="left:539px;top:2px;width:24px;height:24px;border:1px solid #ddd;border-radius:6px;background:#fff"><svg width="24" height="24" style="position:absolute;left:-1px;top:.5px"><path d="M7 12.800 L13.500 6.800 L17.300 6.300 L17.300 10 L11.300 16.500 Z" fill="#222"/><circle cx="15.600" cy="8" r=".8" fill="#fff"/><path d="M10.500 12 l2 2" stroke="#999" stroke-width="1.5"/></svg></div><div class="abs" style="left:1px;top:26px;width:568px;height:21px;border:1px solid #767676;border-radius:2px;background:#fff"></div><div class="abs ar" style="left:5px;top:28px;font-size:11px;color:#111;line-height:12px">*</div><svg class="abs" width="12" height="12" style="left:548px;top:20px"><path d="M2.500 2.500 L9 9 M9 2.500 L2.500 9" stroke="#222" stroke-width="1.1"/></svg><div class="abs" style="left:0;top:47px;width:567px;height:30px;background:linear-gradient(#f0f0f0,#eee 48%,#e4e4e4 52%,#e9e9e9);border:1px solid #d8d8d8;border-top:none"></div><div class="abs dv" style="left:21px;top:54px;font-size:18px;color:#555;line-height:20px">*</div><svg class="abs" width="10" height="6" style="left:544px;top:59px"><path d="M.500 .500 H8.500 L4.500 5 Z" fill="#888"/></svg></div>
<div id="frameL" class="abs"></div>
<div class="abs" style="left:570px;top:104px;width:1px;height:873px;background:#aaa"></div>
<div class="abs" style="left:0;top:975px;width:572px;height:2px;background:#333"></div><div class="abs" style="left:48px;top:975px;width:344px;height:2px;background:#e8e8e8"></div>
<div id="ctb" class="abs"><div class="abs" style="left:1px;top:1px;width:27px;height:27px;border:1px solid #dcdcdc;border-top:none;border-bottom:none"><svg width="27" height="27" style="position:absolute;left:-1px;top:0"><path d="M15 8.500 L11.500 12 L15 15.500" fill="none" stroke="#777" stroke-width="1.300"/></svg></div><div class="abs" style="left:28px;top:1px;width:27px;height:27px;border:1px solid #dcdcdc;border-top:none;border-bottom:none"><svg width="27" height="27" style="position:absolute;left:-1px;top:0"><rect x="9.500" y="8.500" width="8" height="9.500" fill="none" stroke="#888" stroke-width="1.200"/><rect x="11.500" y="7" width="4" height="2.500" fill="#888"/></svg></div><div class="abs" style="left:56px;top:1px;width:27px;height:27px;border:1px solid #dcdcdc;border-top:none;border-bottom:none"><svg width="27" height="27" style="position:absolute;left:-1px;top:0"><path d="M11.500 8.500 L15 12 L11.500 15.500" fill="none" stroke="#777" stroke-width="1.300"/></svg></div><div class="vt" style="left:86px;width:162px">Adapter_Version_Liv</div><div class="vt" style="left:252px;width:115px">AdapterStatus</div><div class="vt" style="left:372px;width:124px">Ages_Warnung</div><div class="vt" style="left:500px;width:103px">Alarmanlage</div><div class="vt" style="left:608px;width:139px">Alarmanlage_Log</div><div class="vt" style="left:752px;width:71px">Alexa_1</div><div class="vt" style="left:828px;width:71px">Alexa_2</div><div class="vt" style="left:904px;width:120px">Alexa_Aussen</div></div>
<div id="cdark" class="abs"></div>
<div id="cv" class="abs"><div class="abs" style="left:8px;top:52px;width:960px;height:776px;background:#484848;box-shadow:0 1px 4px rgba(0,0,0,.5)"></div><div class="abs ar" style="left:8px;top:18px;font-size:24px;line-height:28px;color:#c8c8c8;transform:scaleX(.875);transform-origin:0 50%;white-space:nowrap">Info</div><div class="card" style="left:20px;top:112px;height:50px;background:#02000f"><svg class="ci" width="30" height="32" viewBox="0 0 30 32" style="overflow:visible;"><path d="M10.200 1.700 a1.500 1.500 0 0 1 1.500 -1.500 h3.700 a1.500 1.500 0 0 1 1.500 1.500 V21 l1 2 V28 a1.500 1.500 0 0 1 -1.500 1.500 h-5.700 a1.500 1.500 0 0 1 -1.500 -1.500 V23 l1 -2 Z" fill="#ece8f4"/><rect x="11.900" y="2" width="3.400" height="12.200" fill="#02000f"/><path d="M17.300 2.700 h3.700 M17.300 8 h3.700 M17.300 13.400 h3.700 M17.300 19 h3.700" stroke="#ece8f4" stroke-width="1.200"/></svg><div class="ct">CPU</div><div class="cs">Medion</div><svg class="abs" width="18" height="24" style="left:172px;top:10px"><path d="M9 2 V21.500" stroke="#2fa65a" stroke-width="1.200"/><path d="M2 8.800 L9 1.800 L16 8.800" fill="none" stroke="#c0392b" stroke-width="1.200"/><path d="M2 14.500 L9 21.500 L16 14.500" fill="none" stroke="#2fa65a" stroke-width="1.200"/></svg><div class="cvl" style="font-weight:normal;color:#a8a8b0;transform:scaleX(.8)">28.8 °C</div></div><div class="card" style="left:20px;top:171px;height:50px;background:#02000f"><svg class="ci" width="30" height="32" viewBox="0 0 30 32" style="overflow:visible;"><path d="M10.200 1.700 a1.500 1.500 0 0 1 1.500 -1.500 h3.700 a1.500 1.500 0 0 1 1.500 1.500 V21 l1 2 V28 a1.500 1.500 0 0 1 -1.500 1.500 h-5.700 a1.500 1.500 0 0 1 -1.500 -1.500 V23 l1 -2 Z" fill="#ece8f4"/><rect x="11.900" y="2" width="3.400" height="12.200" fill="#02000f"/><path d="M17.300 2.700 h3.700 M17.300 8 h3.700 M17.300 13.400 h3.700 M17.300 19 h3.700" stroke="#ece8f4" stroke-width="1.200"/></svg><div class="ct">Bad</div><div class="cs">Indoor</div><svg class="abs" width="18" height="24" style="left:172px;top:10px"><path d="M9 2 V21.500" stroke="#2fa65a" stroke-width="1.200"/><path d="M2 8.800 L9 1.800 L16 8.800" fill="none" stroke="#c0392b" stroke-width="1.200"/><path d="M2 14.500 L9 21.500 L16 14.500" fill="none" stroke="#2fa65a" stroke-width="1.200"/></svg><div class="cvl" style="">24.9 °C</div></div><div class="card" style="left:20px;top:230px;height:50px;background:#02000f"><svg class="ci" width="30" height="32" viewBox="0 0 30 32" style="overflow:visible;"><path d="M10.200 1.700 a1.500 1.500 0 0 1 1.500 -1.500 h3.700 a1.500 1.500 0 0 1 1.500 1.500 V21 l1 2 V28 a1.500 1.500 0 0 1 -1.500 1.500 h-5.700 a1.500 1.500 0 0 1 -1.500 -1.500 V23 l1 -2 Z" fill="#ece8f4"/><rect x="11.900" y="2" width="3.400" height="12.200" fill="#02000f"/><path d="M17.300 2.700 h3.700 M17.300 8 h3.700 M17.300 13.400 h3.700 M17.300 19 h3.700" stroke="#ece8f4" stroke-width="1.200"/></svg><div class="ct">Küche</div><div class="cs">Indoor</div><svg class="abs" width="18" height="24" style="left:172px;top:10px"><path d="M9 2 V21.500" stroke="#2fa65a" stroke-width="1.200"/><path d="M2 8.800 L9 1.800 L16 8.800" fill="none" stroke="#c0392b" stroke-width="1.200"/><path d="M2 14.500 L9 21.500 L16 14.500" fill="none" stroke="#2fa65a" stroke-width="1.200"/></svg><div class="cvl" style="">22.6 °C</div></div><div class="card" style="left:20px;top:289px;height:50px;background:#02000f"><svg class="ci" width="30" height="32" viewBox="0 0 30 32" style="overflow:visible;"><path d="M10.200 1.700 a1.500 1.500 0 0 1 1.500 -1.500 h3.700 a1.500 1.500 0 0 1 1.500 1.500 V21 l1 2 V28 a1.500 1.500 0 0 1 -1.500 1.500 h-5.700 a1.500 1.500 0 0 1 -1.500 -1.500 V23 l1 -2 Z" fill="#ece8f4"/><rect x="11.900" y="2" width="3.400" height="12.200" fill="#02000f"/><path d="M17.300 2.700 h3.700 M17.300 8 h3.700 M17.300 13.400 h3.700 M17.300 19 h3.700" stroke="#ece8f4" stroke-width="1.200"/></svg><div class="ct">Heizkörper</div><div class="cs">Esszimmer</div><svg class="abs" width="18" height="24" style="left:172px;top:10px"><path d="M9 2 V21.500" stroke="#2fa65a" stroke-width="1.200"/><path d="M2 8.800 L9 1.800 L16 8.800" fill="none" stroke="#c0392b" stroke-width="1.200"/><path d="M2 14.500 L9 21.500 L16 14.500" fill="none" stroke="#2fa65a" stroke-width="1.200"/></svg><div class="cvl" style="">23.4 °C</div></div><div class="card" style="left:20px;top:349px;height:50px;background:#02000f"><svg class="ci" width="30" height="32" viewBox="0 0 30 32" style="overflow:visible;"><path d="M10.200 1.700 a1.500 1.500 0 0 1 1.500 -1.500 h3.700 a1.500 1.500 0 0 1 1.500 1.500 V21 l1 2 V28 a1.500 1.500 0 0 1 -1.500 1.500 h-5.700 a1.500 1.500 0 0 1 -1.500 -1.500 V23 l1 -2 Z" fill="#ece8f4"/><rect x="11.900" y="2" width="3.400" height="12.200" fill="#02000f"/><path d="M17.300 2.700 h3.700 M17.300 8 h3.700 M17.300 13.400 h3.700 M17.300 19 h3.700" stroke="#ece8f4" stroke-width="1.200"/></svg><div class="ct">Outdoor</div><div class="cs">Garten</div><svg class="abs" width="18" height="24" style="left:172px;top:10px"><path d="M9 2 V21.500" stroke="#2fa65a" stroke-width="1.200"/><path d="M2 8.800 L9 1.800 L16 8.800" fill="none" stroke="#c0392b" stroke-width="1.200"/><path d="M2 14.500 L9 21.500 L16 14.500" fill="none" stroke="#2fa65a" stroke-width="1.200"/></svg><div class="cvl" style="">18.2 °C</div></div><div class="card" style="left:286px;top:112px;height:50px;background:#020f0a"><svg class="ci" width="30" height="32" viewBox="0 0 30 32" style="overflow:visible;"><rect x="8.300" y="1.300" width="14.400" height="28" rx="1.500" fill="none" stroke="#cfe6da" stroke-width="1.300"/><path d="M8.500 26.800 H22.500" stroke="#cfe6da" stroke-width="1"/><path d="M8.300 15.500 h2.200" stroke="#cfe6da" stroke-width="1.400"/></svg><div class="ct">Haustür</div><div class="cs">Vorraum</div><svg class="abs" width="26" height="32" style="left:168px;top:6px"><defs><linearGradient id="lg" x1="0" y1="0" x2="1" y2="0"><stop offset="0" stop-color="#a87808"/><stop offset=".3" stop-color="#f4d648"/><stop offset=".55" stop-color="#e0b020"/><stop offset="1" stop-color="#b88a10"/></linearGradient></defs><path d="M6.500 13 V8.500 a6.500 6.500 0 0 1 13 0 V10.500" fill="none" stroke="#a9a9a9" stroke-width="2.200"/><rect x="2.300" y="13.300" width="21.500" height="16.500" rx="1" fill="url(#lg)" stroke="#2ecc71" stroke-width="1"/></svg><div class="cvl">zu</div></div><div class="card" style="left:286px;top:171px;height:50px;background:#020f0a"><svg class="ci" width="30" height="32" viewBox="0 0 30 32" style="overflow:visible;"><path d="M8.500 2 L22.500 1.300 V27.800 L8.500 29.500 Z" fill="none" stroke="#cfe6da" stroke-width="1.200" stroke-linejoin="round"/><path d="M10.500 3.200 L21 2.700 V26.300 L10.500 28 Z" fill="none" stroke="#cfe6da" stroke-width=".9" stroke-linejoin="round"/><path d="M10.500 15.800 h2" stroke="#cfe6da" stroke-width="1.400"/></svg><div class="ct">Terrassentür</div><div class="cs">Wohnzimmer</div><svg class="abs" width="26" height="32" style="left:168px;top:6px"><defs><linearGradient id="lg" x1="0" y1="0" x2="1" y2="0"><stop offset="0" stop-color="#a87808"/><stop offset=".3" stop-color="#f4d648"/><stop offset=".55" stop-color="#e0b020"/><stop offset="1" stop-color="#b88a10"/></linearGradient></defs><path d="M6.500 13 V8.500 a6.500 6.500 0 0 1 13 0 V10.500" fill="none" stroke="#a9a9a9" stroke-width="2.200"/><rect x="2.300" y="13.300" width="21.500" height="16.500" rx="1" fill="url(#lg)" stroke="#2ecc71" stroke-width="1"/></svg><div class="cvl">offen</div></div><div class="card" style="left:286px;top:230px;height:50px;background:#020f0a"><svg class="ci" width="30" height="32" viewBox="0 0 30 32" style="overflow:visible;"><rect x="1" y="5.800" width="28.500" height="20" rx="1" fill="none" stroke="#cfe6da" stroke-width="1.300"/><path d="M1 7.300 H29.500" stroke="#cfe6da" stroke-width="2.400"/><path d="M15.300 8 V26" stroke="#cfe6da" stroke-width="1.300"/><circle cx="15.300" cy="16.300" r="1.300" fill="#cfe6da"/></svg><div class="ct">Badfenster</div><div class="cs">Bad</div><svg class="abs" width="26" height="32" style="left:168px;top:6px"><defs><linearGradient id="lg" x1="0" y1="0" x2="1" y2="0"><stop offset="0" stop-color="#a87808"/><stop offset=".3" stop-color="#f4d648"/><stop offset=".55" stop-color="#e0b020"/><stop offset="1" stop-color="#b88a10"/></linearGradient></defs><path d="M6.500 13 V8.500 a6.500 6.500 0 0 1 13 0 V10.500" fill="none" stroke="#a9a9a9" stroke-width="2.200"/><rect x="2.300" y="13.300" width="21.500" height="16.500" rx="1" fill="url(#lg)" stroke="#2ecc71" stroke-width="1"/></svg><div class="cvl">zu</div></div><div class="card" style="left:286px;top:289px;height:50px;background:#020f0a"><svg class="ci" width="30" height="32" viewBox="0 0 30 32" style="overflow:visible;"><rect x="8.300" y="1.300" width="14.400" height="28" rx="1.500" fill="none" stroke="#cfe6da" stroke-width="1.300"/><path d="M8.500 26.800 H22.500" stroke="#cfe6da" stroke-width="1"/><path d="M8.300 15.500 h2.200" stroke="#cfe6da" stroke-width="1.400"/></svg><div class="ct">Haustür</div><div class="cs">Vorraum</div><svg class="abs" width="26" height="32" style="left:168px;top:6px"><defs><linearGradient id="lg" x1="0" y1="0" x2="1" y2="0"><stop offset="0" stop-color="#a87808"/><stop offset=".3" stop-color="#f4d648"/><stop offset=".55" stop-color="#e0b020"/><stop offset="1" stop-color="#b88a10"/></linearGradient></defs><path d="M6.500 13 V8.500 a6.500 6.500 0 0 1 13 0 V10.500" fill="none" stroke="#a9a9a9" stroke-width="2.200"/><rect x="2.300" y="13.300" width="21.500" height="16.500" rx="1" fill="url(#lg)" stroke="#2ecc71" stroke-width="1"/></svg><div class="cvl">zu</div></div><div class="card" style="left:286px;top:349px;height:50px;background:#020f0a"><svg class="ci" width="30" height="32" viewBox="0 0 30 32" style="overflow:visible;"><path d="M8.500 2 L22.500 1.300 V27.800 L8.500 29.500 Z" fill="none" stroke="#cfe6da" stroke-width="1.200" stroke-linejoin="round"/><path d="M10.500 3.200 L21 2.700 V26.300 L10.500 28 Z" fill="none" stroke="#cfe6da" stroke-width=".9" stroke-linejoin="round"/><path d="M10.500 15.800 h2" stroke="#cfe6da" stroke-width="1.400"/></svg><div class="ct">Terrassentür</div><div class="cs">Wohnzimmer</div><svg class="abs" width="26" height="32" style="left:168px;top:6px"><defs><linearGradient id="lg" x1="0" y1="0" x2="1" y2="0"><stop offset="0" stop-color="#a87808"/><stop offset=".3" stop-color="#f4d648"/><stop offset=".55" stop-color="#e0b020"/><stop offset="1" stop-color="#b88a10"/></linearGradient></defs><path d="M6.500 13 V8.500 a6.500 6.500 0 0 1 13 0 V10.500" fill="none" stroke="#a9a9a9" stroke-width="2.200"/><rect x="2.300" y="13.300" width="21.500" height="16.500" rx="1" fill="url(#lg)" stroke="#2ecc71" stroke-width="1"/></svg><div class="cvl">offen</div></div><div class="card" style="left:552px;top:112px;height:50px;background:#10020c"><svg class="ci" width="30" height="32" viewBox="0 0 30 32" style="overflow:visible;left:18px;top:9px"><rect x="0" y="1" width="28.300" height="28.200" fill="#ffffff" opacity=".035"/><circle cx="7.600" cy="10.600" r="1.700" fill="none" stroke="#d8c8d1" stroke-width="1"/><path d="M6.500 13 L3 15 L1.800 18 L3.300 18.600 L5.300 16.500 L5 20.500 L2.800 26.500 L4.500 27 L7 22 L9 24.500 L9.300 27 L11 26.700 L10.500 23.500 L8.800 21 L9.300 17.500 L11 19.500 L12.200 18.500 L10.300 15.500 Z" fill="none" stroke="#d8c8d1" stroke-width="1" stroke-linejoin="round"/><path d="M21.500 3.800 H28 L27.200 10.500 H22.800 Z" fill="none" stroke="#d8c8d1" stroke-width="1.200"/><circle cx="24.800" cy="7" r="1.500" fill="#d8c8d1" opacity=".7"/><path d="M25.72 14.39 A7 7 0 0 1 17.92 5.11" fill="none" stroke="#d8c8d1" stroke-width="1" stroke-linecap="butt"/><path d="M27.14 17.35 A10.2 10.2 0 0 1 15.26 3.19" fill="none" stroke="#d8c8d1" stroke-width="1" stroke-linecap="butt"/><path d="M28.64 20.24 A13.4 13.4 0 0 1 12.67 1.21" fill="none" stroke="#d8c8d1" stroke-width="1" stroke-linecap="butt"/><path d="M3 4 L25 26 M21 7.500 L3 26.500" stroke="#d8c8d1" stroke-width="1.200"/></svg><div class="ct">Küche</div><div class="cs">Bewegung</div><div class="cvl">Nein</div></div><div class="card" style="left:552px;top:171px;height:50px;background:#10020c"><svg class="ci" width="30" height="32" viewBox="0 0 30 32" style="overflow:visible;left:18px;top:9px"><rect x="0" y="1" width="28.300" height="28.200" fill="#ffffff" opacity=".035"/><circle cx="7.600" cy="10.600" r="1.700" fill="none" stroke="#d8c8d1" stroke-width="1"/><path d="M6.500 13 L3 15 L1.800 18 L3.300 18.600 L5.300 16.500 L5 20.500 L2.800 26.500 L4.500 27 L7 22 L9 24.500 L9.300 27 L11 26.700 L10.500 23.500 L8.800 21 L9.300 17.500 L11 19.500 L12.200 18.500 L10.300 15.500 Z" fill="none" stroke="#d8c8d1" stroke-width="1" stroke-linejoin="round"/><path d="M21.500 3.800 H28 L27.200 10.500 H22.800 Z" fill="none" stroke="#d8c8d1" stroke-width="1.200"/><circle cx="24.800" cy="7" r="1.500" fill="#d8c8d1" opacity=".7"/><path d="M25.72 14.39 A7 7 0 0 1 17.92 5.11" fill="none" stroke="#d8c8d1" stroke-width="1" stroke-linecap="butt"/><path d="M27.14 17.35 A10.2 10.2 0 0 1 15.26 3.19" fill="none" stroke="#d8c8d1" stroke-width="1" stroke-linecap="butt"/><path d="M28.64 20.24 A13.4 13.4 0 0 1 12.67 1.21" fill="none" stroke="#d8c8d1" stroke-width="1" stroke-linecap="butt"/><path d="M3 4 L25 26 M21 7.500 L3 26.500" stroke="#d8c8d1" stroke-width="1.200"/></svg><div class="ct">Vorraum</div><div class="cs">Bewegung</div><div class="cvl">Nein</div></div><div class="card" style="left:552px;top:230px;height:50px;background:#10020c"><svg class="ci" width="30" height="32" viewBox="0 0 30 32" style="overflow:visible;left:18px;top:9px"><rect x="0" y="1" width="28.300" height="28.200" fill="#ffffff" opacity=".035"/><circle cx="7.600" cy="10.600" r="1.700" fill="none" stroke="#d8c8d1" stroke-width="1"/><path d="M6.500 13 L3 15 L1.800 18 L3.300 18.600 L5.300 16.500 L5 20.500 L2.800 26.500 L4.500 27 L7 22 L9 24.500 L9.300 27 L11 26.700 L10.500 23.500 L8.800 21 L9.300 17.500 L11 19.500 L12.200 18.500 L10.300 15.500 Z" fill="none" stroke="#d8c8d1" stroke-width="1" stroke-linejoin="round"/><path d="M21.500 3.800 H28 L27.200 10.500 H22.800 Z" fill="none" stroke="#d8c8d1" stroke-width="1.200"/><circle cx="24.800" cy="7" r="1.500" fill="#d8c8d1" opacity=".7"/><path d="M25.72 14.39 A7 7 0 0 1 17.92 5.11" fill="none" stroke="#d8c8d1" stroke-width="1" stroke-linecap="butt"/><path d="M27.14 17.35 A10.2 10.2 0 0 1 15.26 3.19" fill="none" stroke="#d8c8d1" stroke-width="1" stroke-linecap="butt"/><path d="M28.64 20.24 A13.4 13.4 0 0 1 12.67 1.21" fill="none" stroke="#d8c8d1" stroke-width="1" stroke-linecap="butt"/><path d="M3 4 L25 26 M21 7.500 L3 26.500" stroke="#d8c8d1" stroke-width="1.200"/></svg><div class="ct">Küche</div><div class="cs">Bewegung</div><div class="cvl">Nein</div></div><div class="card" style="left:552px;top:289px;height:50px;background:#10020c"><svg class="ci" width="30" height="32" viewBox="0 0 30 32" style="overflow:visible;left:18px;top:9px"><rect x="0" y="1" width="28.300" height="28.200" fill="#ffffff" opacity=".035"/><circle cx="7.600" cy="10.600" r="1.700" fill="none" stroke="#d8c8d1" stroke-width="1"/><path d="M6.500 13 L3 15 L1.800 18 L3.300 18.600 L5.300 16.500 L5 20.500 L2.800 26.500 L4.500 27 L7 22 L9 24.500 L9.300 27 L11 26.700 L10.500 23.500 L8.800 21 L9.300 17.500 L11 19.500 L12.200 18.500 L10.300 15.500 Z" fill="none" stroke="#d8c8d1" stroke-width="1" stroke-linejoin="round"/><path d="M21.500 3.800 H28 L27.200 10.500 H22.800 Z" fill="none" stroke="#d8c8d1" stroke-width="1.200"/><circle cx="24.800" cy="7" r="1.500" fill="#d8c8d1" opacity=".7"/><path d="M25.72 14.39 A7 7 0 0 1 17.92 5.11" fill="none" stroke="#d8c8d1" stroke-width="1" stroke-linecap="butt"/><path d="M27.14 17.35 A10.2 10.2 0 0 1 15.26 3.19" fill="none" stroke="#d8c8d1" stroke-width="1" stroke-linecap="butt"/><path d="M28.64 20.24 A13.4 13.4 0 0 1 12.67 1.21" fill="none" stroke="#d8c8d1" stroke-width="1" stroke-linecap="butt"/><path d="M3 4 L25 26 M21 7.500 L3 26.500" stroke="#d8c8d1" stroke-width="1.200"/></svg><div class="ct">Vorraum</div><div class="cs">Bewegung</div><div class="cvl">Nein</div></div><div class="card" style="left:552px;top:349px;height:50px;background:#10020c"><svg class="ci" width="30" height="32" viewBox="0 0 30 32" style="overflow:visible;left:18px;top:9px"><rect x="0" y="1" width="28.300" height="28.200" fill="#ffffff" opacity=".035"/><circle cx="7.600" cy="10.600" r="1.700" fill="none" stroke="#d8c8d1" stroke-width="1"/><path d="M6.500 13 L3 15 L1.800 18 L3.300 18.600 L5.300 16.500 L5 20.500 L2.800 26.500 L4.500 27 L7 22 L9 24.500 L9.300 27 L11 26.700 L10.500 23.500 L8.800 21 L9.300 17.500 L11 19.500 L12.200 18.500 L10.300 15.500 Z" fill="none" stroke="#d8c8d1" stroke-width="1" stroke-linejoin="round"/><path d="M21.500 3.800 H28 L27.200 10.500 H22.800 Z" fill="none" stroke="#d8c8d1" stroke-width="1.200"/><circle cx="24.800" cy="7" r="1.500" fill="#d8c8d1" opacity=".7"/><path d="M25.72 14.39 A7 7 0 0 1 17.92 5.11" fill="none" stroke="#d8c8d1" stroke-width="1" stroke-linecap="butt"/><path d="M27.14 17.35 A10.2 10.2 0 0 1 15.26 3.19" fill="none" stroke="#d8c8d1" stroke-width="1" stroke-linecap="butt"/><path d="M28.64 20.24 A13.4 13.4 0 0 1 12.67 1.21" fill="none" stroke="#d8c8d1" stroke-width="1" stroke-linecap="butt"/><path d="M3 4 L25 26 M21 7.500 L3 26.500" stroke="#d8c8d1" stroke-width="1.200"/></svg><div class="ct">Küche</div><div class="cs">Bewegung</div><div class="cvl">Nein</div></div><div class="card" style="left:820px;top:112px;height:50px;background:#151515"><svg class="ci" width="30" height="32" viewBox="0 0 30 32" style="overflow:visible;left:19px;top:11px"><path d="M13.20 20.15 A9.152000000000001 9.152000000000001 0 1 1 20.25 9.30" fill="none" stroke="#fff" stroke-width="1.976" stroke-linecap="butt"/><path d="M7.42 15.82 A6.032 6.032 0 1 1 16.05 14.91" fill="none" stroke="#fff" stroke-width="0.8320000000000001" stroke-linecap="butt"/><path d="M10.68 10.06 L17.54 7.14 L12.08 12.34 Z" fill="#fff"/><circle cx="11.3" cy="11.2" r="1.77" fill="#fff"/><path d="M20.45 11.46 C22.53 15.10 25.39 17.70 25.39 20.56 A4.84 4.84 0 0 1 15.67 20.56 C15.67 17.70 18.37 15.10 20.45 11.46 Z" fill="#fff" stroke="#151515" stroke-width="0.83"/><path d="M19.67 16.14 C17.85 18.74 17.59 21.34 18.89 22.90" fill="none" stroke="#151515" stroke-width="0.57"/></svg><div class="ct">Bad</div><div class="cs">Luftfeuchte</div></div><div class="card" style="left:820px;top:171px;height:50px;background:#151515"><svg class="ci" width="30" height="32" viewBox="0 0 30 32" style="overflow:visible;left:19px;top:11px"><path d="M13.20 20.15 A9.152000000000001 9.152000000000001 0 1 1 20.25 9.30" fill="none" stroke="#fff" stroke-width="1.976" stroke-linecap="butt"/><path d="M7.42 15.82 A6.032 6.032 0 1 1 16.05 14.91" fill="none" stroke="#fff" stroke-width="0.8320000000000001" stroke-linecap="butt"/><path d="M10.68 10.06 L17.54 7.14 L12.08 12.34 Z" fill="#fff"/><circle cx="11.3" cy="11.2" r="1.77" fill="#fff"/><path d="M20.45 11.46 C22.53 15.10 25.39 17.70 25.39 20.56 A4.84 4.84 0 0 1 15.67 20.56 C15.67 17.70 18.37 15.10 20.45 11.46 Z" fill="#fff" stroke="#151515" stroke-width="0.83"/><path d="M19.67 16.14 C17.85 18.74 17.59 21.34 18.89 22.90" fill="none" stroke="#151515" stroke-width="0.57"/></svg><div class="ct">Outdoor</div><div class="cs">Luftfeuchte</div></div><div class="card" style="left:820px;top:231px;height:50px;background:#151515"><svg class="ci" width="30" height="32" viewBox="0 0 30 32" style="overflow:visible;left:19px;top:11px"><path d="M4.34 19.46 L1.66 21.71" stroke="#fff" stroke-width="1.21" opacity="0.9"/><path d="M2.09 17.88 L-0.13 19.03" stroke="#fff" stroke-width="0.99" opacity="0.9"/><path d="M1.12 15.38 L-1.30 16.03" stroke="#fff" stroke-width="0.99" opacity="0.9"/><path d="M0.71 12.74 L-1.79 12.85" stroke="#fff" stroke-width="0.99" opacity="0.9"/><path d="M1.87 10.24 L-1.58 9.63" stroke="#fff" stroke-width="1.21" opacity="0.9"/><path d="M1.64 7.49 L-0.67 6.54" stroke="#fff" stroke-width="0.99" opacity="0.9"/><path d="M2.92 5.15 L0.88 3.71" stroke="#fff" stroke-width="0.99" opacity="0.9"/><path d="M4.69 3.13 L3.00 1.29" stroke="#fff" stroke-width="0.99" opacity="0.9"/><path d="M7.35 2.41 L5.60 -0.62" stroke="#fff" stroke-width="1.21" opacity="0.9"/><path d="M9.30 0.47 L8.55 -1.92" stroke="#fff" stroke-width="0.99" opacity="0.9"/><path d="M11.93 -0.05 L11.71 -2.54" stroke="#fff" stroke-width="0.99" opacity="0.9"/><path d="M14.61 0.01 L14.93 -2.47" stroke="#fff" stroke-width="0.99" opacity="0.9"/><path d="M16.86 1.58 L18.06 -1.71" stroke="#fff" stroke-width="1.21" opacity="0.9"/><path d="M19.61 1.83 L20.95 -0.28" stroke="#fff" stroke-width="0.99" opacity="0.9"/><path d="M21.70 3.50 L23.47 1.73" stroke="#fff" stroke-width="0.99" opacity="0.9"/><path d="M23.37 5.59 L25.48 4.25" stroke="#fff" stroke-width="0.99" opacity="0.9"/><path d="M23.62 8.34 L26.91 7.14" stroke="#fff" stroke-width="1.21" opacity="0.9"/><path d="M25.19 10.59 L27.67 10.27" stroke="#fff" stroke-width="0.99" opacity="0.9"/><path d="M25.25 13.27 L27.74 13.49" stroke="#fff" stroke-width="0.99" opacity="0.9"/><path d="M24.73 15.90 L27.12 16.65" stroke="#fff" stroke-width="0.99" opacity="0.9"/><path d="M22.79 17.85 L25.82 19.60" stroke="#fff" stroke-width="1.21" opacity="0.9"/><path d="M1.50 3.45 L15.00 13.70" stroke="#fff" stroke-width="1.30" stroke-linecap="round"/><path d="M14.00 12.95 L17.75 16.95" stroke="#fff" stroke-width="2.75" stroke-linecap="round"/><circle cx="13.25" cy="12.45" r="0.95" fill="#151515"/><path d="M15.50 14.45 L17.50 16.70" stroke="#151515" stroke-width="0.90" stroke-linecap="round"/><text x="15.400" y="27.800" font-family="DejaVu Sans, sans-serif" font-weight="bold" font-size="8" fill="#fff" textLength="12.300" lengthAdjust="spacingAndGlyphs">bar</text></svg><div class="ct">Outdoor</div><div class="cs">Luftdruck</div></div><div class="card" style="left:820px;top:289px;height:50px;background:#151515"><svg class="ci" width="30" height="32" viewBox="0 0 30 32" style="overflow:visible;left:19px;top:11px"><path d="M13.20 20.15 A9.152000000000001 9.152000000000001 0 1 1 20.25 9.30" fill="none" stroke="#fff" stroke-width="1.976" stroke-linecap="butt"/><path d="M7.42 15.82 A6.032 6.032 0 1 1 16.05 14.91" fill="none" stroke="#fff" stroke-width="0.8320000000000001" stroke-linecap="butt"/><path d="M10.68 10.06 L17.54 7.14 L12.08 12.34 Z" fill="#fff"/><circle cx="11.3" cy="11.2" r="1.77" fill="#fff"/><path d="M20.45 11.46 C22.53 15.10 25.39 17.70 25.39 20.56 A4.84 4.84 0 0 1 15.67 20.56 C15.67 17.70 18.37 15.10 20.45 11.46 Z" fill="#fff" stroke="#151515" stroke-width="0.83"/><path d="M19.67 16.14 C17.85 18.74 17.59 21.34 18.89 22.90" fill="none" stroke="#151515" stroke-width="0.57"/></svg><div class="ct">Bad</div><div class="cs">Luftfeuchte</div></div><div class="card" style="left:820px;top:349px;height:50px;background:#151515"><svg class="ci" width="30" height="32" viewBox="0 0 30 32" style="overflow:visible;left:19px;top:11px"><path d="M13.20 20.15 A9.152000000000001 9.152000000000001 0 1 1 20.25 9.30" fill="none" stroke="#fff" stroke-width="1.976" stroke-linecap="butt"/><path d="M7.42 15.82 A6.032 6.032 0 1 1 16.05 14.91" fill="none" stroke="#fff" stroke-width="0.8320000000000001" stroke-linecap="butt"/><path d="M10.68 10.06 L17.54 7.14 L12.08 12.34 Z" fill="#fff"/><circle cx="11.3" cy="11.2" r="1.77" fill="#fff"/><path d="M20.45 11.46 C22.53 15.10 25.39 17.70 25.39 20.56 A4.84 4.84 0 0 1 15.67 20.56 C15.67 17.70 18.37 15.10 20.45 11.46 Z" fill="#fff" stroke="#151515" stroke-width="0.83"/><path d="M19.67 16.14 C17.85 18.74 17.59 21.34 18.89 22.90" fill="none" stroke="#151515" stroke-width="0.57"/></svg><div class="ct">Outdoor</div><div class="cs">Luftfeuchte</div></div><div class="card" style="border-color:#cdc4b3;left:20px;top:466px;height:50px;background:#0c0912"><svg class="ci" width="30" height="32" viewBox="0 0 30 32" style="overflow:visible;top:6.500px"><rect x="10.600" y="9.300" width="8.800" height="14.600" rx="3.300" fill="none" stroke="#eee" stroke-width="1.500"/><path d="M2.500 11.200 H7.500 M2.500 16.500 H7.500 M2.500 21.800 H7.500 M22.500 11.200 H27.500 M22.500 16.500 H27.500 M22.500 21.800 H27.500 M12.400 2.500 V6 M17.600 2.500 V6 M5.500 4 L8.500 6.800 M24.800 4 L21.800 6.800" stroke="#eee" stroke-width="1.300" stroke-linecap="round"/><path d="M12.500 24.800 L17.600 25.600 M12.500 26.500 L17.600 27.300 M12.800 28.200 L17.300 28.900 M13.500 29.800 L16.500 30.200" stroke="#eee" stroke-width="1.100" stroke-linecap="round"/></svg><div class="ct">Vorraum</div><div class="cs">HM Licht</div><div class="abs" style="left:184px;top:20px;width:47px;height:16px;border-radius:8px;background:#1e88e5"></div><div class="abs" style="left:207.500px;top:16px;width:24px;height:24px;border-radius:50%;background:#2196f3;box-shadow:0 1px 2px rgba(0,0,0,.4)"></div></div><div class="card" style="border-color:#cdc4b3;left:20px;top:525px;height:50px;background:#0c0912"><svg class="ci" width="30" height="32" viewBox="0 0 30 32" style="overflow:visible;top:6.500px"><rect x="10.600" y="9.300" width="8.800" height="14.600" rx="3.300" fill="none" stroke="#eee" stroke-width="1.500"/><path d="M4.500 11.200 H6.800 M4.500 16.500 H6.800 M4.500 21.800 H6.800 M23.200 11.200 H25.500 M23.200 16.500 H25.500 M23.200 21.800 H25.500 M12.400 4 V5.500 M17.600 4 V5.500 M7 5.300 L8.500 6.800 M23.300 5.300 L21.800 6.800" stroke="#eee" stroke-width="1" stroke-linecap="round" opacity=".55"/><path d="M12.500 24.800 L17.600 25.600 M12.500 26.500 L17.600 27.300 M12.800 28.200 L17.300 28.900 M13.500 29.800 L16.500 30.200" stroke="#eee" stroke-width="1.100" stroke-linecap="round"/></svg><div class="ct">Bad</div><div class="cs">Hue Licht</div><div class="abs" style="left:184px;top:20px;width:47px;height:16px;border-radius:8px;background:#7b7b7b"></div><div class="abs" style="left:184px;top:16px;width:24px;height:24px;border-radius:50%;background:#c9c9c9;box-shadow:0 1px 2px rgba(0,0,0,.4)"></div></div><div class="card" style="border-color:#cdc4b3;left:20px;top:585px;height:50px;background:#0c0912"><svg class="ci" width="30" height="32" viewBox="0 0 30 32" style="overflow:visible;top:6.500px"><rect x="10.600" y="9.300" width="8.800" height="14.600" rx="3.300" fill="none" stroke="#eee" stroke-width="1.500"/><path d="M4.500 11.200 H6.800 M4.500 16.500 H6.800 M4.500 21.800 H6.800 M23.200 11.200 H25.500 M23.200 16.500 H25.500 M23.200 21.800 H25.500 M12.400 4 V5.500 M17.600 4 V5.500 M7 5.300 L8.500 6.800 M23.300 5.300 L21.800 6.800" stroke="#eee" stroke-width="1" stroke-linecap="round" opacity=".55"/><path d="M12.500 24.800 L17.600 25.600 M12.500 26.500 L17.600 27.300 M12.800 28.200 L17.300 28.900 M13.500 29.800 L16.500 30.200" stroke="#eee" stroke-width="1.100" stroke-linecap="round"/></svg><div class="ct">Büro</div><div class="cs">Hue Licht</div><div class="abs" style="left:184px;top:20px;width:47px;height:16px;border-radius:8px;background:#7b7b7b"></div><div class="abs" style="left:184px;top:16px;width:24px;height:24px;border-radius:50%;background:#c9c9c9;box-shadow:0 1px 2px rgba(0,0,0,.4)"></div></div><div class="card" style="border-color:#cdc4b3;left:20px;top:644px;height:50px;background:#0c0912"><svg class="ci" width="30" height="32" viewBox="0 0 30 32" style="overflow:visible;top:6.500px"><rect x="10.600" y="9.300" width="8.800" height="14.600" rx="3.300" fill="none" stroke="#eee" stroke-width="1.500"/><path d="M2.500 11.200 H7.500 M2.500 16.500 H7.500 M2.500 21.800 H7.500 M22.500 11.200 H27.500 M22.500 16.500 H27.500 M22.500 21.800 H27.500 M12.400 2.500 V6 M17.600 2.500 V6 M5.500 4 L8.500 6.800 M24.800 4 L21.800 6.800" stroke="#eee" stroke-width="1.300" stroke-linecap="round"/><path d="M12.500 24.800 L17.600 25.600 M12.500 26.500 L17.600 27.300 M12.800 28.200 L17.300 28.900 M13.500 29.800 L16.500 30.200" stroke="#eee" stroke-width="1.100" stroke-linecap="round"/></svg><div class="ct">Schlafzimmer</div><div class="cs">Hue Licht</div><div class="abs" style="left:184px;top:20px;width:47px;height:16px;border-radius:8px;background:#1e88e5"></div><div class="abs" style="left:207.500px;top:16px;width:24px;height:24px;border-radius:50%;background:#2196f3;box-shadow:0 1px 2px rgba(0,0,0,.4)"></div></div><div class="card" style="border-color:#f4f4f4;left:20px;top:704px;height:50px;background:#0c0912"><svg class="ci" width="30" height="32" viewBox="0 0 30 32" style="overflow:visible;top:6.500px"><rect x="10.600" y="9.300" width="8.800" height="14.600" rx="3.300" fill="none" stroke="#eee" stroke-width="1.500"/><path d="M2.500 11.200 H7.500 M2.500 16.500 H7.500 M2.500 21.800 H7.500 M22.500 11.200 H27.500 M22.500 16.500 H27.500 M22.500 21.800 H27.500 M12.400 2.500 V6 M17.600 2.500 V6 M5.500 4 L8.500 6.800 M24.800 4 L21.800 6.800" stroke="#eee" stroke-width="1.300" stroke-linecap="round"/><path d="M12.500 24.800 L17.600 25.600 M12.500 26.500 L17.600 27.300 M12.800 28.200 L17.300 28.900 M13.500 29.800 L16.500 30.200" stroke="#eee" stroke-width="1.100" stroke-linecap="round"/></svg><div class="ct">Esszimmer</div><div class="cs">Stehlampe</div><div class="abs" style="left:184px;top:20px;width:47px;height:16px;border-radius:8px;background:#1e88e5"></div><div class="abs" style="left:207.500px;top:16px;width:24px;height:24px;border-radius:50%;background:#2196f3;box-shadow:0 1px 2px rgba(0,0,0,.4)"></div></div><div class="card" style="border-color:#f4f4f4;left:20px;top:763px;height:50px;background:#0c0912"><svg class="ci" width="30" height="32" viewBox="0 0 30 32" style="overflow:visible;top:6.500px"><rect x="10.600" y="9.300" width="8.800" height="14.600" rx="3.300" fill="none" stroke="#eee" stroke-width="1.500"/><path d="M2.500 11.200 H7.500 M2.500 16.500 H7.500 M2.500 21.800 H7.500 M22.500 11.200 H27.500 M22.500 16.500 H27.500 M22.500 21.800 H27.500 M12.400 2.500 V6 M17.600 2.500 V6 M5.500 4 L8.500 6.800 M24.800 4 L21.800 6.800" stroke="#eee" stroke-width="1.300" stroke-linecap="round"/><path d="M12.500 24.800 L17.600 25.600 M12.500 26.500 L17.600 27.300 M12.800 28.200 L17.300 28.900 M13.500 29.800 L16.500 30.200" stroke="#eee" stroke-width="1.100" stroke-linecap="round"/></svg><div class="ct">Küche</div><div class="cs">On/Off</div><div class="abs" style="left:184px;top:20px;width:47px;height:16px;border-radius:8px;background:#1e88e5"></div><div class="abs" style="left:207.500px;top:16px;width:24px;height:24px;border-radius:50%;background:#2196f3;box-shadow:0 1px 2px rgba(0,0,0,.4)"></div></div><div class="card" style="left:286px;top:466px;height:50px;background:#0c0912"><svg class="ci" width="30" height="32" viewBox="0 0 30 32" style="overflow:visible;"><defs><linearGradient id="k0" x1="0" y1="0" x2="0" y2="1"><stop offset="0" stop-color="#1e9ad0"/><stop offset=".2" stop-color="#46c0f0"/><stop offset=".45" stop-color="#f4f6fb"/><stop offset=".58" stop-color="#ffffff"/><stop offset=".75" stop-color="#f8ee70"/><stop offset=".86" stop-color="#efe030"/><stop offset=".9" stop-color="#6a4a12"/><stop offset=".93" stop-color="#b89a18"/><stop offset="1" stop-color="#b89a18"/></linearGradient></defs><rect x="13.200" y="-2.800" width="3.800" height="35" rx="1.900" fill="url(#k0)"/></svg><div class="ct">Küche</div><div class="cs">Kelvin{hue.0.Philips_hue.Hue_lightstrip_Küche.ct}</div><div class="abs" style="left:132px;top:22px;width:101px;height:4px;border-radius:2px;background:#7d7d7d"></div><div class="abs" style="left:132px;top:22px;width:18.5px;height:4px;border-radius:2px;background:#fff"></div><div class="abs" style="left:142.0px;top:15.500px;width:17px;height:17px;border-radius:50%;background:#fff"></div></div><div class="card" style="left:286px;top:525px;height:50px;background:#0c0912"><svg class="ci" width="30" height="32" viewBox="0 0 30 32" style="overflow:visible;"><defs><linearGradient id="k1" x1="0" y1="0" x2="0" y2="1"><stop offset="0" stop-color="#1e9ad0"/><stop offset=".2" stop-color="#46c0f0"/><stop offset=".45" stop-color="#f4f6fb"/><stop offset=".58" stop-color="#ffffff"/><stop offset=".75" stop-color="#f8ee70"/><stop offset=".86" stop-color="#efe030"/><stop offset=".9" stop-color="#6a4a12"/><stop offset=".93" stop-color="#b89a18"/><stop offset="1" stop-color="#b89a18"/></linearGradient></defs><rect x="13.200" y="-2.800" width="3.800" height="35" rx="1.900" fill="url(#k1)"/></svg><div class="ct">Küche</div><div class="cs">Kelvin{hue.0.Philips_hue.Hue_lightstrip_Küche.ct}</div><div class="abs" style="left:132px;top:22px;width:101px;height:4px;border-radius:2px;background:#7d7d7d"></div><div class="abs" style="left:132px;top:22px;width:18.5px;height:4px;border-radius:2px;background:#fff"></div><div class="abs" style="left:142.0px;top:15.500px;width:17px;height:17px;border-radius:50%;background:#fff"></div></div><div class="card" style="left:286px;top:585px;height:50px;background:#0c0912"><svg class="ci" width="30" height="32" viewBox="0 0 30 32" style="overflow:visible;"><defs><linearGradient id="k2" x1="0" y1="0" x2="0" y2="1"><stop offset="0" stop-color="#1e9ad0"/><stop offset=".2" stop-color="#46c0f0"/><stop offset=".45" stop-color="#f4f6fb"/><stop offset=".58" stop-color="#ffffff"/><stop offset=".75" stop-color="#f8ee70"/><stop offset=".86" stop-color="#efe030"/><stop offset=".9" stop-color="#6a4a12"/><stop offset=".93" stop-color="#b89a18"/><stop offset="1" stop-color="#b89a18"/></linearGradient></defs><rect x="13.200" y="-2.800" width="3.800" height="35" rx="1.900" fill="url(#k2)"/></svg><div class="ct">Küche</div><div class="cs">Kelvin{hue.0.Philips_hue.Hue_lightstrip_Küche.ct}</div><div class="abs" style="left:132px;top:22px;width:101px;height:4px;border-radius:2px;background:#7d7d7d"></div><div class="abs" style="left:132px;top:22px;width:18.5px;height:4px;border-radius:2px;background:#fff"></div><div class="abs" style="left:142.0px;top:15.500px;width:17px;height:17px;border-radius:50%;background:#fff"></div></div><div class="card" style="left:286px;top:644px;height:50px;background:#0c0912"><svg class="ci" width="30" height="32" viewBox="0 0 30 32" style="overflow:visible;"><defs><linearGradient id="k3" x1="0" y1="0" x2="0" y2="1"><stop offset="0" stop-color="#1e9ad0"/><stop offset=".2" stop-color="#46c0f0"/><stop offset=".45" stop-color="#f4f6fb"/><stop offset=".58" stop-color="#ffffff"/><stop offset=".75" stop-color="#f8ee70"/><stop offset=".86" stop-color="#efe030"/><stop offset=".9" stop-color="#6a4a12"/><stop offset=".93" stop-color="#b89a18"/><stop offset="1" stop-color="#b89a18"/></linearGradient></defs><rect x="13.200" y="-2.800" width="3.800" height="35" rx="1.900" fill="url(#k3)"/></svg><div class="ct">Küche</div><div class="cs">Kelvin{hue.0.Philips_hue.Hue_lightstrip_Küche.ct}</div><div class="abs" style="left:132px;top:22px;width:101px;height:4px;border-radius:2px;background:#7d7d7d"></div><div class="abs" style="left:132px;top:22px;width:18.5px;height:4px;border-radius:2px;background:#fff"></div><div class="abs" style="left:142.0px;top:15.500px;width:17px;height:17px;border-radius:50%;background:#fff"></div></div><div class="card" style="left:286px;top:704px;height:50px;background:#0c0912"><svg class="ci" width="30" height="32" viewBox="0 0 30 32" style="overflow:visible;"><defs><linearGradient id="k4" x1="0" y1="0" x2="0" y2="1"><stop offset="0" stop-color="#1e9ad0"/><stop offset=".2" stop-color="#46c0f0"/><stop offset=".45" stop-color="#f4f6fb"/><stop offset=".58" stop-color="#ffffff"/><stop offset=".75" stop-color="#f8ee70"/><stop offset=".86" stop-color="#efe030"/><stop offset=".9" stop-color="#6a4a12"/><stop offset=".93" stop-color="#b89a18"/><stop offset="1" stop-color="#b89a18"/></linearGradient></defs><rect x="13.200" y="-2.800" width="3.800" height="35" rx="1.900" fill="url(#k4)"/></svg><div class="ct">Küche</div><div class="cs">Kelvin{hue.0.Philips_hue.Hue_lightstrip_Küche.ct}</div><div class="abs" style="left:132px;top:22px;width:101px;height:4px;border-radius:2px;background:#7d7d7d"></div><div class="abs" style="left:132px;top:22px;width:18.5px;height:4px;border-radius:2px;background:#fff"></div><div class="abs" style="left:142.0px;top:15.500px;width:17px;height:17px;border-radius:50%;background:#fff"></div></div><div class="card" style="left:286px;top:763px;height:50px;background:#0c0912"><svg class="ci" width="30" height="32" viewBox="0 0 30 32" style="overflow:visible;"><defs><linearGradient id="k5" x1="0" y1="0" x2="0" y2="1"><stop offset="0" stop-color="#1e9ad0"/><stop offset=".2" stop-color="#46c0f0"/><stop offset=".45" stop-color="#f4f6fb"/><stop offset=".58" stop-color="#ffffff"/><stop offset=".75" stop-color="#f8ee70"/><stop offset=".86" stop-color="#efe030"/><stop offset=".9" stop-color="#6a4a12"/><stop offset=".93" stop-color="#b89a18"/><stop offset="1" stop-color="#b89a18"/></linearGradient></defs><rect x="13.200" y="-2.800" width="3.800" height="35" rx="1.900" fill="url(#k5)"/></svg><div class="ct">Küche</div><div class="cs">Kelvin{hue.0.Philips_hue.Hue_lightstrip_Küche.ct}</div><div class="abs" style="left:132px;top:22px;width:101px;height:4px;border-radius:2px;background:#7d7d7d"></div><div class="abs" style="left:132px;top:22px;width:18.5px;height:4px;border-radius:2px;background:#fff"></div><div class="abs" style="left:142.0px;top:15.500px;width:17px;height:17px;border-radius:50%;background:#fff"></div></div><div class="card" style="left:552px;top:466px;height:50px;background:#0c0912"><svg class="ci" width="30" height="32" viewBox="0 0 30 32" style="overflow:visible;top:6.500px"><rect x="10.600" y="9.300" width="8.800" height="14.600" rx="3.300" fill="none" stroke="#e2e2e2" stroke-width="1.500"/><path d="M2.500 11.200 H7.500 M2.500 16.500 H7.500 M2.500 21.800 H7.500 M22.500 11.200 H27 M12.400 2.500 V6 M17.600 2.500 V6 M5.500 4 L8.500 6.800 M24.800 4 L21.800 6.800" stroke="#e2e2e2" stroke-width="1.300" stroke-linecap="round"/><path d="M22.500 16.500 H25 M22.500 21.800 H24.500" stroke="#e2e2e2" stroke-width="1" stroke-linecap="round" opacity=".7"/><path d="M12.500 24.800 L17.600 25.600 M12.500 26.500 L17.600 27.300 M12.800 28.200 L17.300 28.900 M13.500 29.800 L16.500 30.200" stroke="#e2e2e2" stroke-width="1.100" stroke-linecap="round"/></svg><div class="ct">Küche</div><div class="cs">{hue.0.Philips_hue.Hue_lightstrip_Küche.level}</div><div class="abs" style="left:132px;top:22px;width:101px;height:4px;border-radius:2px;background:#7d7d7d"></div><div class="abs" style="left:132px;top:22px;width:69.5px;height:4px;border-radius:2px;background:#fff"></div><div class="abs" style="left:193.0px;top:15.500px;width:17px;height:17px;border-radius:50%;background:#fff"></div></div><div class="card" style="left:552px;top:525px;height:50px;background:#0c0912"><svg class="ci" width="30" height="32" viewBox="0 0 30 32" style="overflow:visible;top:6.500px"><rect x="10.600" y="9.300" width="8.800" height="14.600" rx="3.300" fill="none" stroke="#e2e2e2" stroke-width="1.500"/><path d="M2.500 11.200 H7.500 M2.500 16.500 H7.500 M2.500 21.800 H7.500 M22.500 11.200 H27 M12.400 2.500 V6 M17.600 2.500 V6 M5.500 4 L8.500 6.800 M24.800 4 L21.800 6.800" stroke="#e2e2e2" stroke-width="1.300" stroke-linecap="round"/><path d="M22.500 16.500 H25 M22.500 21.800 H24.500" stroke="#e2e2e2" stroke-width="1" stroke-linecap="round" opacity=".7"/><path d="M12.500 24.800 L17.600 25.600 M12.500 26.500 L17.600 27.300 M12.800 28.200 L17.300 28.900 M13.500 29.800 L16.500 30.200" stroke="#e2e2e2" stroke-width="1.100" stroke-linecap="round"/></svg><div class="ct">Küche</div><div class="cs">{hue.0.Philips_hue.Hue_lightstrip_Küche.level}</div><div class="abs" style="left:132px;top:22px;width:101px;height:4px;border-radius:2px;background:#7d7d7d"></div><div class="abs" style="left:132px;top:22px;width:69.5px;height:4px;border-radius:2px;background:#fff"></div><div class="abs" style="left:193.0px;top:15.500px;width:17px;height:17px;border-radius:50%;background:#fff"></div></div><div class="card" style="left:552px;top:585px;height:50px;background:#0c0912"><svg class="ci" width="30" height="32" viewBox="0 0 30 32" style="overflow:visible;top:6.500px"><rect x="10.600" y="9.300" width="8.800" height="14.600" rx="3.300" fill="none" stroke="#e2e2e2" stroke-width="1.500"/><path d="M2.500 11.200 H7.500 M2.500 16.500 H7.500 M2.500 21.800 H7.500 M22.500 11.200 H27 M12.400 2.500 V6 M17.600 2.500 V6 M5.500 4 L8.500 6.800 M24.800 4 L21.800 6.800" stroke="#e2e2e2" stroke-width="1.300" stroke-linecap="round"/><path d="M22.500 16.500 H25 M22.500 21.800 H24.500" stroke="#e2e2e2" stroke-width="1" stroke-linecap="round" opacity=".7"/><path d="M12.500 24.800 L17.600 25.600 M12.500 26.500 L17.600 27.300 M12.800 28.200 L17.300 28.900 M13.500 29.800 L16.500 30.200" stroke="#e2e2e2" stroke-width="1.100" stroke-linecap="round"/></svg><div class="ct">Küche</div><div class="cs">{hue.0.Philips_hue.Hue_lightstrip_Küche.level}</div><div class="abs" style="left:132px;top:22px;width:101px;height:4px;border-radius:2px;background:#7d7d7d"></div><div class="abs" style="left:132px;top:22px;width:69.5px;height:4px;border-radius:2px;background:#fff"></div><div class="abs" style="left:193.0px;top:15.500px;width:17px;height:17px;border-radius:50%;background:#fff"></div></div><div class="card" style="left:552px;top:644px;height:50px;background:#0c0912"><svg class="ci" width="30" height="32" viewBox="0 0 30 32" style="overflow:visible;top:6.500px"><rect x="10.600" y="9.300" width="8.800" height="14.600" rx="3.300" fill="none" stroke="#e2e2e2" stroke-width="1.500"/><path d="M2.500 11.200 H7.500 M2.500 16.500 H7.500 M2.500 21.800 H7.500 M22.500 11.200 H27 M12.400 2.500 V6 M17.600 2.500 V6 M5.500 4 L8.500 6.800 M24.800 4 L21.800 6.800" stroke="#e2e2e2" stroke-width="1.300" stroke-linecap="round"/><path d="M22.500 16.500 H25 M22.500 21.800 H24.500" stroke="#e2e2e2" stroke-width="1" stroke-linecap="round" opacity=".7"/><path d="M12.500 24.800 L17.600 25.600 M12.500 26.500 L17.600 27.300 M12.800 28.200 L17.300 28.900 M13.500 29.800 L16.500 30.200" stroke="#e2e2e2" stroke-width="1.100" stroke-linecap="round"/></svg><div class="ct">Küche</div><div class="cs">{hue.0.Philips_hue.Hue_lightstrip_Küche.level}</div><div class="abs" style="left:132px;top:22px;width:101px;height:4px;border-radius:2px;background:#7d7d7d"></div><div class="abs" style="left:132px;top:22px;width:69.5px;height:4px;border-radius:2px;background:#fff"></div><div class="abs" style="left:193.0px;top:15.500px;width:17px;height:17px;border-radius:50%;background:#fff"></div></div><div class="card" style="left:552px;top:704px;height:50px;background:#0c0912"><svg class="ci" width="30" height="32" viewBox="0 0 30 32" style="overflow:visible;top:6.500px"><rect x="10.600" y="9.300" width="8.800" height="14.600" rx="3.300" fill="none" stroke="#e2e2e2" stroke-width="1.500"/><path d="M2.500 11.200 H7.500 M2.500 16.500 H7.500 M2.500 21.800 H7.500 M22.500 11.200 H27 M12.400 2.500 V6 M17.600 2.500 V6 M5.500 4 L8.500 6.800 M24.800 4 L21.800 6.800" stroke="#e2e2e2" stroke-width="1.300" stroke-linecap="round"/><path d="M22.500 16.500 H25 M22.500 21.800 H24.500" stroke="#e2e2e2" stroke-width="1" stroke-linecap="round" opacity=".7"/><path d="M12.500 24.800 L17.600 25.600 M12.500 26.500 L17.600 27.300 M12.800 28.200 L17.300 28.900 M13.500 29.800 L16.500 30.200" stroke="#e2e2e2" stroke-width="1.100" stroke-linecap="round"/></svg><div class="ct">Küche</div><div class="cs">{hue.0.Philips_hue.Hue_lightstrip_Küche.level}</div><div class="abs" style="left:132px;top:22px;width:101px;height:4px;border-radius:2px;background:#7d7d7d"></div><div class="abs" style="left:132px;top:22px;width:69.5px;height:4px;border-radius:2px;background:#fff"></div><div class="abs" style="left:193.0px;top:15.500px;width:17px;height:17px;border-radius:50%;background:#fff"></div></div><div class="card" style="left:552px;top:763px;height:50px;background:#0c0912"><svg class="ci" width="30" height="32" viewBox="0 0 30 32" style="overflow:visible;top:6.500px"><rect x="10.600" y="9.300" width="8.800" height="14.600" rx="3.300" fill="none" stroke="#e2e2e2" stroke-width="1.500"/><path d="M2.500 11.200 H7.500 M2.500 16.500 H7.500 M2.500 21.800 H7.500 M22.500 11.200 H27 M12.400 2.500 V6 M17.600 2.500 V6 M5.500 4 L8.500 6.800 M24.800 4 L21.800 6.800" stroke="#e2e2e2" stroke-width="1.300" stroke-linecap="round"/><path d="M22.500 16.500 H25 M22.500 21.800 H24.500" stroke="#e2e2e2" stroke-width="1" stroke-linecap="round" opacity=".7"/><path d="M12.500 24.800 L17.600 25.600 M12.500 26.500 L17.600 27.300 M12.800 28.200 L17.300 28.900 M13.500 29.800 L16.500 30.200" stroke="#e2e2e2" stroke-width="1.100" stroke-linecap="round"/></svg><div class="ct">Küche</div><div class="cs">{hue.0.Philips_hue.Hue_lightstrip_Küche.level}</div><div class="abs" style="left:132px;top:22px;width:101px;height:4px;border-radius:2px;background:#7d7d7d"></div><div class="abs" style="left:132px;top:22px;width:69.5px;height:4px;border-radius:2px;background:#fff"></div><div class="abs" style="left:193.0px;top:15.500px;width:17px;height:17px;border-radius:50%;background:#fff"></div></div><div class="card" style="left:820px;top:466px;height:50px;background:#10020c"><svg class="ci" width="30" height="32" viewBox="0 0 30 32" style="overflow:visible;left:17px;top:9px"><path d="M15.500 1.300 L29.500 9.800 V31 H25.800 V12.800 H5.200 V31 H1.500 V9.800 Z" fill="#f8e8f2"/><rect x="7" y="14.800" width="17" height="4" fill="#f8e8f2"/><rect x="7" y="20.600" width="17" height="4" fill="#f8e8f2"/><rect x="7" y="26.400" width="17" height="4.600" fill="#f8e8f2"/></svg><div class="ct">test</div></div><div class="card" style="left:820px;top:525px;height:50px;background:#10020c"><svg class="ci" width="30" height="32" viewBox="0 0 30 32" style="overflow:visible;left:17px;top:9px"><path d="M15.500 1.300 L29.500 9.800 V31 H25.800 V12.800 H5.200 V31 H1.500 V9.800 Z" fill="#f8e8f2"/><rect x="7" y="14.800" width="17" height="4" fill="#f8e8f2"/><rect x="7" y="20.600" width="17" height="4" fill="#f8e8f2"/><rect x="7" y="26.400" width="17" height="4.600" fill="#f8e8f2"/></svg><div class="ct">test</div></div><div class="card" style="left:820px;top:585px;height:50px;background:#10020c"><svg class="ci" width="30" height="32" viewBox="0 0 30 32" style="overflow:visible;left:17px;top:9px"><path d="M15.500 1.300 L29.500 9.800 V31 H25.800 V12.800 H5.200 V31 H1.500 V9.800 Z" fill="#f8e8f2"/><rect x="7" y="14.800" width="17" height="4" fill="#f8e8f2"/><rect x="7" y="20.600" width="17" height="4" fill="#f8e8f2"/><rect x="7" y="26.400" width="17" height="4.600" fill="#f8e8f2"/></svg><div class="ct">test</div></div><div class="card" style="left:820px;top:644px;height:50px;background:#10020c"><svg class="ci" width="30" height="32" viewBox="0 0 30 32" style="overflow:visible;left:17px;top:9px"><path d="M15.500 1.300 L29.500 9.800 V31 H25.800 V12.800 H5.200 V31 H1.500 V9.800 Z" fill="#f8e8f2"/><rect x="7" y="14.800" width="17" height="4" fill="#f8e8f2"/><rect x="7" y="20.600" width="17" height="4" fill="#f8e8f2"/><rect x="7" y="26.400" width="17" height="4.600" fill="#f8e8f2"/></svg><div class="ct">test</div></div><div class="card" style="left:820px;top:704px;height:50px;background:#10020c"><svg class="ci" width="30" height="32" viewBox="0 0 30 32" style="overflow:visible;left:17px;top:9px"><path d="M15.500 1.300 L29.500 9.800 V31 H25.800 V12.800 H5.200 V31 H1.500 V9.800 Z" fill="#f8e8f2"/><rect x="7" y="14.800" width="17" height="4" fill="#f8e8f2"/><rect x="7" y="20.600" width="17" height="4" fill="#f8e8f2"/><rect x="7" y="26.400" width="17" height="4.600" fill="#f8e8f2"/></svg><div class="ct">test</div></div><div class="card" style="left:820px;top:763px;height:50px;background:#10020c"><svg class="ci" width="30" height="32" viewBox="0 0 30 32" style="overflow:visible;left:17px;top:9px"><path d="M15.500 1.300 L29.500 9.800 V31 H25.800 V12.800 H5.200 V31 H1.500 V9.800 Z" fill="#f8e8f2"/><rect x="7" y="14.800" width="17" height="4" fill="#f8e8f2"/><rect x="7" y="20.600" width="17" height="4" fill="#f8e8f2"/><rect x="7" y="26.400" width="17" height="4.600" fill="#f8e8f2"/></svg><div class="ct">test</div></div><div class="sh" style="left:68px;top:75px">Temperatur</div><div class="sh" style="left:334px;top:75px">Fenster/Tür</div><div class="sh" style="left:600px;top:75px">Bewegung</div><div class="sh" style="left:861px;top:75px">Luftfeuchte/Luftdruck</div><div class="sh" style="left:68px;top:429px">Licht</div><div class="sh" style="left:868px;top:431px">Garage</div><svg class="abs" width="18" height="34" viewBox="0 0 18 34" style="left:36px;top:65px"><path d="M4.900 3 a1.400 1.400 0 0 1 1.400 -1.400 h3 a1.400 1.400 0 0 1 1.400 1.400 V22 l1.700 2.400 V31 a1.700 1.700 0 0 1 -1.700 1.700 h-6.200 a1.700 1.700 0 0 1 -1.700 -1.700 V24.400 l2.100 -2.400 Z" fill="#fff"/><rect x="6.500" y="3.700" width="2.500" height="13.100" fill="#484848"/><path d="M11.200 3.400 h4.100 M11.200 9.300 h4.100 M11.200 15 h4.100 M11.200 21 h4.100" stroke="#fff" stroke-width="1.200"/></svg><svg class="abs" width="30" height="30" viewBox="0 0 30 30" style="left:296px;top:67px"><rect x="2.600" y="2.600" width="25" height="25" rx="1.500" fill="none" stroke="#fff" stroke-width="1.300"/><path d="M2.600 3.500 H27.600" stroke="#fff" stroke-width="2.200"/><path d="M25.300 14.500 h2.300" stroke="#fff" stroke-width="1.600"/></svg><svg class="abs" width="36" height="36" viewBox="0 0 36 36" style="left:559px;top:64px"><rect x="11.800" y="2.700" width="12.500" height="3.900" rx="1.300" fill="none" stroke="#fff" stroke-width="1.300"/><path d="M13.800 6.800 C14.200 9 16 10.300 18 10.300 C20 10.300 21.800 9 22.200 6.800" fill="none" stroke="#fff" stroke-width="1.300"/><path d="M15.500 8 h5" stroke="#ddd" stroke-width="1"/><path d="M14.600 12.300 h6.700" stroke="#ddd" stroke-width=".8"/><path d="M14.300 11.300 L3 26.900 C9 35.500 27 35.500 33.400 26.900 L21.500 11.300" fill="none" stroke="#fff" stroke-width="1"/></svg><svg class="abs" width="30" height="34" viewBox="0 0 30 34" style="left:830px;top:65px"><rect x="2" y="2.500" width="10" height="29.500" rx="1" fill="none" stroke="#fff" stroke-width="1.200"/><path d="M7 11.500 c1.500 2.500 2.600 4 2.600 5.800 a2.600 2.600 0 0 1 -5.200 0 c0 -1.800 1.100 -3.300 2.600 -5.800 Z" fill="#fff"/><path d="M21.5 6 c1.800 3 3.200 4.800 3.200 7 a3.200 3.200 0 0 1 -6.400 0 c0 -2.200 1.400 -4 3.200 -7 Z" fill="none" stroke="#fff" stroke-width="1"/><path d="M17.5 20 c1.800 3 3.200 4.800 3.200 7 a3.200 3.200 0 0 1 -6.400 0 c0 -2.200 1.400 -4 3.200 -7 Z" fill="none" stroke="#fff" stroke-width="1"/></svg><svg class="abs" width="22" height="34" viewBox="0 0 22 34" style="left:34px;top:419px"><rect x="5.300" y="2.500" width="11.500" height="19.500" rx="5.200" fill="none" stroke="#fff" stroke-width="1.300"/><path d="M7 24 L15.300 25.200 M7 26.300 L15.300 27.500 M7.300 28.600 L15 29.800 M8.500 30.900 L13.800 31.600" stroke="#fff" stroke-width="1.200" stroke-linecap="round"/></svg><svg class="abs" width="36" height="28" viewBox="0 0 36 28" style="left:828px;top:422px"><path d="M2 3.800 H32.500" stroke="#fff" stroke-width="2.400"/><path d="M3.500 4 V26 M31 4 V26" stroke="#fff" stroke-width="1.400"/><path d="M8 17.500 L10.500 12.800 H25 L27.500 17.500 V24 H24.500 V22.500 H11 V24 H8 Z" fill="#fff"/><circle cx="11" cy="19.800" r="1.200" fill="#484848"/><circle cx="24.500" cy="19.800" r="1.200" fill="#484848"/><path d="M11 16.800 L12 14.200 H23.500 L24.500 16.800 Z" fill="#484848"/></svg><div class="abs" style="left:147px;top:3px;width:353px;height:59px;border:2px dashed #ff8c00;background:rgba(255,255,255,.08)"></div><svg class="abs" width="30" height="32" viewBox="0 0 30 32" style="overflow:visible;left:165px;top:12px"><rect x="10.600" y="9.300" width="8.800" height="14.600" rx="3.300" fill="none" stroke="#eee" stroke-width="1.500"/><path d="M2.500 11.200 H7.500 M2.500 16.500 H7.500 M2.500 21.800 H7.500 M22.500 11.200 H27.500 M22.500 16.500 H27.500 M22.500 21.800 H27.500 M12.400 2.500 V6 M17.600 2.500 V6 M5.500 4 L8.500 6.800 M24.800 4 L21.800 6.800" stroke="#eee" stroke-width="1.300" stroke-linecap="round"/><path d="M12.500 24.800 L17.600 25.600 M12.500 26.500 L17.600 27.300 M12.800 28.200 L17.300 28.900 M13.500 29.800 L16.500 30.200" stroke="#eee" stroke-width="1.100" stroke-linecap="round"/></svg><div class="abs" style="left:436px;top:23.5px;width:46px;height:16px;border-radius:8px;background:#777"></div><div class="abs" style="left:433.5px;top:19.5px;width:24px;height:24px;border-radius:50%;background:#ccc;box-shadow:0 1px 2px rgba(0,0,0,.4)"></div><svg class="abs" width="9" height="9" style="left:485.5px;top:46.5px"><path d="M8 1 L1 8 M8 3 L3 8 M8 5 L5 8 M8 7 L7 8" stroke="#bbb" stroke-width=".9"/></svg></div>
<div class="abs" style="left:1529px;top:133px;width:1px;height:839px;background:#9a9a9a"></div>
<div class="abs" style="left:572px;top:971px;width:958px;height:1px;background:#9a9a9a"></div>
<div class="abs" style="left:1543px;top:104px;width:1px;height:873px;background:#fff"></div>
<div class="abs" style="left:572px;top:975px;width:972px;height:2px;background:#333"></div>
<div class="abs" style="left:1540px;top:975px;width:380px;height:2px;background:#333"></div>
<div id="rp" class="abs dv"><div class="abs" style="left:0;top:0;width:373px;height:16px;background:linear-gradient(#efefef,#eee 45%,#e6e6e6 45%,#e8e8e8);border-top:1px solid #ccc"></div><div class="abs dv" style="left:7px;top:6px;font-size:15.500px;font-weight:bold;color:#444;line-height:20px;white-space:nowrap">Eigenschaften <span style="font-size:10.500px">(MDCSS v2.5 30.04.2020)</span></div><div class="abs" style="left:0;top:20px;width:373px;height:28px;background:#fff"></div><div class="sbtn" style="left:348px;top:6px;width:17px;height:18px;border-radius:3px"><svg width="17" height="18" style="position:absolute;left:-1px;top:-1px"><rect x="3.6" y="7.4" width="1.100" height="1.100" fill="#777"/><rect x="3.6" y="9.8" width="1.100" height="1.100" fill="#777"/><rect x="5.7" y="7.4" width="1.100" height="1.100" fill="#777"/><rect x="5.7" y="9.8" width="1.100" height="1.100" fill="#777"/><rect x="7.8" y="7.4" width="1.100" height="1.100" fill="#777"/><rect x="7.8" y="9.8" width="1.100" height="1.100" fill="#777"/><rect x="9.9" y="7.4" width="1.100" height="1.100" fill="#777"/><rect x="9.9" y="9.8" width="1.100" height="1.100" fill="#777"/><rect x="12.0" y="7.4" width="1.100" height="1.100" fill="#777"/><rect x="12.0" y="9.8" width="1.100" height="1.100" fill="#777"/></svg></div><div class="rtab" style="left:3px;width:46.5px">View</div><div class="rtab on" style="left:53px;width:72.5px">w02355</div><div class="rtab" style="left:129px;width:42px">CSS</div><div class="rtab" style="left:174px;width:66px">Skripte</div><div class="abs" style="left:4px;top:46px;width:364px;height:1px;background:#aaa"></div><div class="grow" style="top:50px;padding-left:30px"><svg class="abs" width="20" height="20" style="left:2px;top:0px"><path d="M2 2.500 H17 L11 10 V16.500 L8 18 V10 Z" fill="none" stroke="#222" stroke-width="1.400" stroke-linejoin="miter"/></svg>Generell<div class="cb"></div></div><div class="grow" style="height:22px;top:71px;padding-left:1px">Sichtbarkeit<div class="cb"></div></div><div class="grow" style="height:22px;line-height:24px;top:93px;padding-left:1px">Allgemein</div><div class="sbtn" style="left:304px;top:93px;width:21px;height:22px"><svg width="21" height="22" style="position:absolute;left:-1px;top:-1px"><path d="M7 13 H14 L10.500 9 Z" fill="#888"/></svg></div><div class="lbl" style="top:118px;">Objekt<br>ID:</div><div class="inp" style="left:59px;top:121px;width:211px;height:20px;"></div><div class="sbtn" style="left:277px;top:120px;width:22px;height:22px"><svg width="22" height="22" style="position:absolute;left:-1px;top:-1px"><rect x="8" y="7" width="7" height="8.500" fill="#888"/><path d="M6.500 8 h1.500 M6.500 10 h1.500 M6.500 12 h1.500 M6.500 14 h1.500" stroke="#bbb" stroke-width=".8"/></svg></div><div class="lbl" style="top:161px;">Titel:</div><div class="inp" style="left:59px;top:149px;width:211px;height:34px;"><svg width="8" height="8" style="position:absolute;right:1px;bottom:1px"><path d="M7.500 1 L1 7.500 M7.500 4.500 L4.500 7.500" stroke="#666" stroke-width=".9"/></svg></div><div class="sbtn" style="left:277px;top:156px;width:22px;height:22px"><svg width="22" height="22" style="position:absolute;left:-1px;top:-1px"><rect x="8" y="7" width="7" height="8.500" fill="#888"/><path d="M6.500 8 h1.500 M6.500 10 h1.500 M6.500 12 h1.500 M6.500 14 h1.500" stroke="#bbb" stroke-width=".8"/></svg></div><div class="lbl" style="top:191px;">Untertite<br>l:</div><div class="inp" style="left:59px;top:187.5px;width:211px;height:34px;"><svg width="8" height="8" style="position:absolute;right:1px;bottom:1px"><path d="M7.500 1 L1 7.500 M7.500 4.500 L4.500 7.500" stroke="#666" stroke-width=".9"/></svg></div><div class="sbtn" style="left:277px;top:194px;width:22px;height:22px"><svg width="22" height="22" style="position:absolute;left:-1px;top:-1px"><rect x="8" y="7" width="7" height="8.500" fill="#888"/><path d="M6.500 8 h1.500 M6.500 10 h1.500 M6.500 12 h1.500 M6.500 14 h1.500" stroke="#bbb" stroke-width=".8"/></svg></div><div class="lbl" style="top:226px;">Text-<br>color:</div><div class="inp" style="left:59px;top:229px;width:211px;height:20px;border:2px solid #111;line-height:15px;padding-left:2px">white</div><div class="sbtn" style="left:277px;top:228px;width:22px;height:22px"><svg width="22" height="22" style="position:absolute;left:-1px;top:-1px"><rect x="8" y="7" width="7" height="8.500" fill="#888"/><path d="M6.500 8 h1.500 M6.500 10 h1.500 M6.500 12 h1.500 M6.500 14 h1.500" stroke="#bbb" stroke-width=".8"/></svg></div><div class="lbl" style="top:256px;">card-<br>icon:</div><div class="inp" style="left:59px;top:259.5px;width:211px;height:20px;">widgets/material/img/light_light_d</div><div class="sbtn" style="left:277px;top:258px;width:22px;height:22px"><svg width="22" height="22" style="position:absolute;left:-1px;top:-1px"><rect x="8" y="7" width="7" height="8.500" fill="#888"/><path d="M6.500 8 h1.500 M6.500 10 h1.500 M6.500 12 h1.500 M6.500 14 h1.500" stroke="#bbb" stroke-width=".8"/></svg></div><div class="lbl" style="top:285px;">Transpar<br>enz<br>Farbe:</div><div class="inp" style="left:59px;top:297px;width:263px;height:18px;line-height:16px;border-radius:3px">Transparenz Weiss<svg width="12" height="8" style="position:absolute;right:5px;top:5px"><path d="M1.500 1.500 L6 6 L10.500 1.500" fill="none" stroke="#111" stroke-width="1.800"/></svg></div><div class="abs" style="left:4px;top:328px;width:364px;height:3px;background:#d4d4d4;border-top:1px solid #bbb"></div><div class="grow" style="top:334.5px;padding-left:1px">CSS Allgemein</div><div class="sbtn" style="left:304px;top:333px;width:21px;height:22px"><svg width="21" height="22" style="position:absolute;left:-1px;top:-1px"><path d="M7 13 H14 L10.500 9 Z" fill="#888"/></svg></div><div class="lbl" style="top:360px;">position:</div><div class="inp" style="left:59px;top:357px;width:237px;height:18px;border-radius:3px"><svg width="12" height="8" style="position:absolute;right:5px;top:5px"><path d="M1.500 1.500 L6 6 L10.500 1.500" fill="none" stroke="#111" stroke-width="1.800"/></svg></div><div class="sbtn" style="left:303px;top:357px;width:18px;height:17px"><svg width="18" height="17" style="position:absolute;left:-1px;top:-1px"><path d="M9 3.200 L10.600 6.800 L14.400 7.100 L11.500 9.600 L12.400 13.400 L9 11.400 L5.600 13.400 L6.500 9.600 L3.600 7.100 L7.400 6.800 Z" fill="#777"/></svg></div><div class="lbl" style="top:380px;">display:</div><div class="inp" style="left:59px;top:378px;width:237px;height:17px;border-color:#d0d0d0;background:#f8f8f8;border-radius:3px"><svg width="12" height="8" style="position:absolute;right:5px;top:5px"><path d="M1.500 1.500 L6 6 L10.500 1.500" fill="none" stroke="#aaa" stroke-width="1.800"/></svg></div><div class="sbtn" style="left:303px;top:378px;width:18px;height:17px"><svg width="18" height="17" style="position:absolute;left:-1px;top:-1px"><path d="M9 3.200 L10.600 6.800 L14.400 7.100 L11.500 9.600 L12.400 13.400 L9 11.400 L5.600 13.400 L6.500 9.600 L3.600 7.100 L7.400 6.800 Z" fill="#777"/></svg></div><div class="lbl" style="top:401px;">left:</div><div class="inp" style="left:59px;top:397.5px;width:210px;height:20px;">148px</div><div class="sbtn dv" style="left:273px;top:400px;width:18px;height:17px;font-size:10.500px;color:#666;text-align:center;line-height:14px">px</div><div class="sbtn" style="left:303px;top:399px;width:18px;height:17px"><svg width="18" height="17" style="position:absolute;left:-1px;top:-1px"><path d="M9 3.200 L10.600 6.800 L14.400 7.100 L11.500 9.600 L12.400 13.400 L9 11.400 L5.600 13.400 L6.500 9.600 L3.600 7.100 L7.400 6.800 Z" fill="#777"/></svg></div><div class="lbl" style="top:423px;">top:</div><div class="inp" style="left:59px;top:419.5px;width:210px;height:20px;">4px</div><div class="sbtn dv" style="left:273px;top:422px;width:18px;height:17px;font-size:10.500px;color:#666;text-align:center;line-height:14px">px</div><div class="sbtn" style="left:303px;top:421px;width:18px;height:17px"><svg width="18" height="17" style="position:absolute;left:-1px;top:-1px"><path d="M9 3.200 L10.600 6.800 L14.400 7.100 L11.500 9.600 L12.400 13.400 L9 11.400 L5.600 13.400 L6.500 9.600 L3.600 7.100 L7.400 6.800 Z" fill="#777"/></svg></div><div class="lbl" style="top:445px;">width:</div><div class="inp" style="left:59px;top:441.5px;width:210px;height:20px;"></div><div class="sbtn dv" style="left:273px;top:444px;width:18px;height:17px;font-size:10.500px;color:#666;text-align:center;line-height:14px">px</div><div class="sbtn" style="left:303px;top:443px;width:18px;height:17px"><svg width="18" height="17" style="position:absolute;left:-1px;top:-1px"><path d="M9 3.200 L10.600 6.800 L14.400 7.100 L11.500 9.600 L12.400 13.400 L9 11.400 L5.600 13.400 L6.500 9.600 L3.600 7.100 L7.400 6.800 Z" fill="#777"/></svg></div><div class="lbl" style="top:467px;">height:</div><div class="inp" style="left:59px;top:463.5px;width:210px;height:20px;"></div><div class="sbtn dv" style="left:273px;top:466px;width:18px;height:17px;font-size:10.500px;color:#666;text-align:center;line-height:14px">px</div><div class="sbtn" style="left:303px;top:465px;width:18px;height:17px"><svg width="18" height="17" style="position:absolute;left:-1px;top:-1px"><path d="M9 3.200 L10.600 6.800 L14.400 7.100 L11.500 9.600 L12.400 13.400 L9 11.400 L5.600 13.400 L6.500 9.600 L3.600 7.100 L7.400 6.800 Z" fill="#777"/></svg></div><div class="lbl" style="top:489px;">z-index:</div><div class="inp" style="left:59px;top:485.5px;width:239px;height:20px;border-color:#bbb"><div style="position:absolute;right:1px;top:1px;width:15px;height:16px;background:#efefef;border-radius:2px"><svg width="15" height="16"><path d="M4 6.500 L7.500 3 L11 6.500 Z M4 9.500 L7.500 13 L11 9.500 Z" fill="#777"/></svg></div></div><div class="sbtn" style="left:303px;top:487px;width:18px;height:17px"><svg width="18" height="17" style="position:absolute;left:-1px;top:-1px"><path d="M9 3.200 L10.600 6.800 L14.400 7.100 L11.500 9.600 L12.400 13.400 L9 11.400 L5.600 13.400 L6.500 9.600 L3.600 7.100 L7.400 6.800 Z" fill="#777"/></svg></div><div class="lbl" style="top:509px;">overflow<br>-x:</div><div class="inp" style="left:59px;top:513px;width:237px;height:18px;border-radius:3px"><svg width="12" height="8" style="position:absolute;right:5px;top:5px"><path d="M1.500 1.500 L6 6 L10.500 1.500" fill="none" stroke="#111" stroke-width="1.800"/></svg></div><div class="sbtn" style="left:303px;top:513px;width:18px;height:17px"><svg width="18" height="17" style="position:absolute;left:-1px;top:-1px"><path d="M9 3.200 L10.600 6.800 L14.400 7.100 L11.500 9.600 L12.400 13.400 L9 11.400 L5.600 13.400 L6.500 9.600 L3.600 7.100 L7.400 6.800 Z" fill="#777"/></svg></div><div class="lbl" style="top:539px;">overflow<br>-y:</div><div class="inp" style="left:59px;top:543.5px;width:237px;height:18px;border-radius:3px"><svg width="12" height="8" style="position:absolute;right:5px;top:5px"><path d="M1.500 1.500 L6 6 L10.500 1.500" fill="none" stroke="#111" stroke-width="1.800"/></svg></div><div class="sbtn" style="left:303px;top:543px;width:18px;height:17px"><svg width="18" height="17" style="position:absolute;left:-1px;top:-1px"><path d="M9 3.200 L10.600 6.800 L14.400 7.100 L11.500 9.600 L12.400 13.400 L9 11.400 L5.600 13.400 L6.500 9.600 L3.600 7.100 L7.400 6.800 Z" fill="#777"/></svg></div><div class="lbl" style="top:572px;">opacity:</div><div class="inp" style="left:59px;top:568.5px;width:237px;height:20px;"></div><div class="sbtn" style="left:303px;top:570px;width:18px;height:17px"><svg width="18" height="17" style="position:absolute;left:-1px;top:-1px"><path d="M9 3.200 L10.600 6.800 L14.400 7.100 L11.500 9.600 L12.400 13.400 L9 11.400 L5.600 13.400 L6.500 9.600 L3.600 7.100 L7.400 6.800 Z" fill="#777"/></svg></div><div class="lbl" style="top:594px;">cursor:</div><div class="inp" style="left:59px;top:590.5px;width:237px;height:20px;"></div><div class="sbtn" style="left:303px;top:592px;width:18px;height:17px"><svg width="18" height="17" style="position:absolute;left:-1px;top:-1px"><path d="M9 3.200 L10.600 6.800 L14.400 7.100 L11.500 9.600 L12.400 13.400 L9 11.400 L5.600 13.400 L6.500 9.600 L3.600 7.100 L7.400 6.800 Z" fill="#777"/></svg></div><div class="lbl" style="top:612px;font-style:italic;">transfor<br>m:</div><div class="inp" style="left:59px;top:616px;width:237px;height:20px;"></div><div class="sbtn" style="left:303px;top:618px;width:18px;height:17px"><svg width="18" height="17" style="position:absolute;left:-1px;top:-1px"><path d="M9 3.200 L10.600 6.800 L14.400 7.100 L11.500 9.600 L12.400 13.400 L9 11.400 L5.600 13.400 L6.500 9.600 L3.600 7.100 L7.400 6.800 Z" fill="#777"/></svg></div><div class="grow" style="top:641.0px;padding-left:1px">CSS Font &amp; Text<div class="cb"></div></div><div class="grow" style="top:662.05px;padding-left:1px">CSS Hintergrund (background-...)<div class="cb"></div></div><div class="grow" style="top:683.1px;padding-left:1px">CSS Ränder (border-...)<div class="cb"></div></div><div class="grow" style="top:704.15px;padding-left:1px">CSS Schatten und Abstand<div class="cb"></div></div><div class="grow" style="top:725.2px;padding-left:1px">Gesten<div class="cb"></div></div><div class="grow" style="top:746.25px;padding-left:1px">Signalbilder<div class="cb"></div></div><div class="grow" style="top:767.3px;padding-left:1px">Zeige letzte Änderung<div class="cb"></div></div><div class="abs" style="left:373px;top:0;width:1px;height:871px;background:#999"></div><div class="abs" style="left:374px;top:0;width:1px;height:871px;background:#c8c8c8"></div></div>
<div class="abs" style="left:1919px;top:0;width:1px;height:977px;background:#b4b4b4"></div>
</body></html>
